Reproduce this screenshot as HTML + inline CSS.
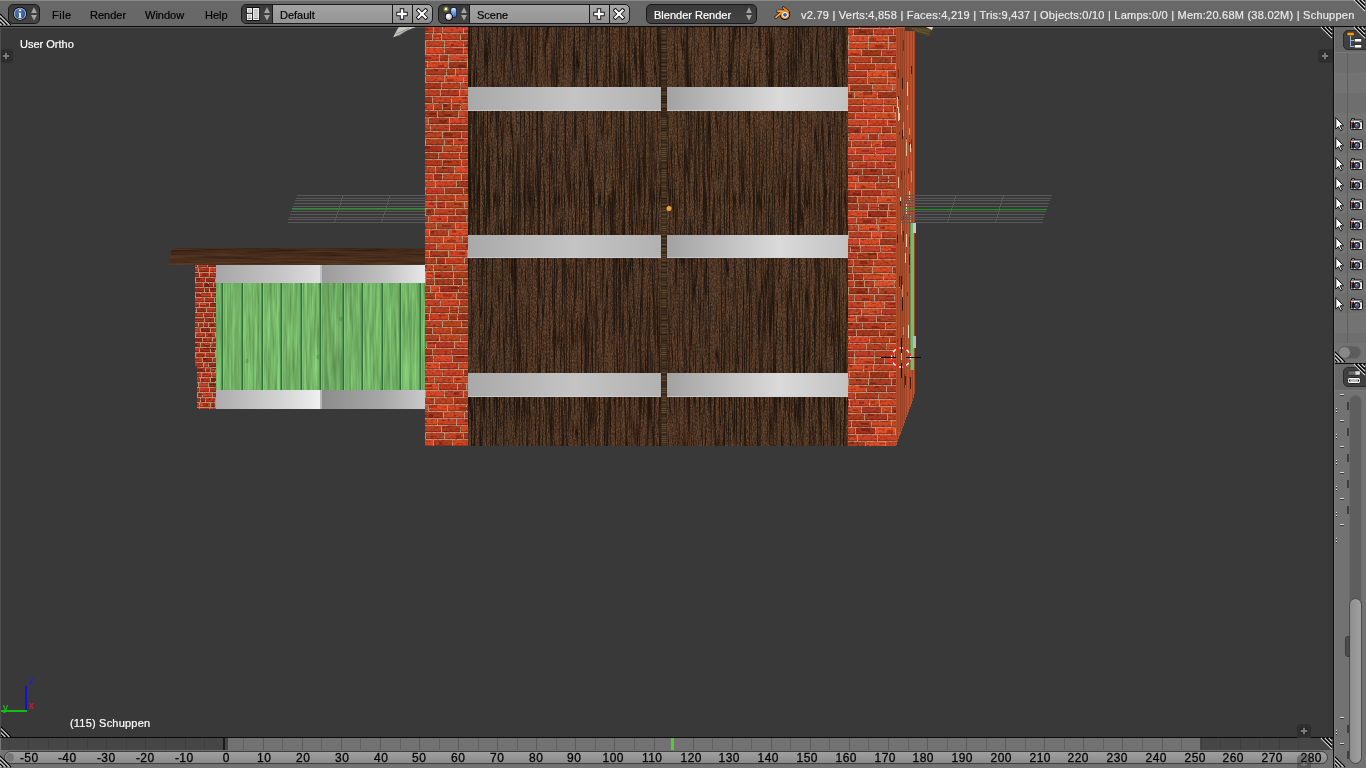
<!DOCTYPE html>
<html><head><meta charset="utf-8">
<style>
*{margin:0;padding:0;box-sizing:border-box}
html,body{width:1366px;height:768px;overflow:hidden;background:#393939;font-family:"Liberation Sans",sans-serif}
.a{position:absolute}
#hdr{left:0;top:0;width:1366px;height:27px;background:#686868;border-bottom:1px solid #0a0a0a}
#vp{left:0;top:27px;width:1333px;height:710px;background:#393939;overflow:hidden}
#vsep{left:1333px;top:27px;width:1px;height:741px;background:#0a0a0a}
#outl{left:1334px;top:27px;width:32px;height:336px;background:#727272}
#psep{left:1334px;top:363px;width:32px;height:1px;background:#0a0a0a}
#props{left:1334px;top:364px;width:32px;height:404px;background:#727272}
#tl{left:0;top:737px;width:1333px;height:31px;background:#727272;border-top:1px solid #0a0a0a}
.dk{background:linear-gradient(#3a3a3a,#444);border:1px solid #191919;border-radius:5px}
.fld{background:linear-gradient(#a3a3a3,#959595);border:1px solid #191919}
.btn{background:linear-gradient(#a8a8a8,#8e8e8e);border:1px solid #191919}
.t{position:absolute;will-change:transform;-webkit-text-stroke:.2px currentColor;white-space:nowrap;font-size:11px;line-height:13px;color:#000}
</style></head><body>
<svg width="0" height="0" style="position:absolute"><defs>
<linearGradient id="mA" x1="0" x2="1"><stop offset="0" stop-color="#a4a4a4"/><stop offset=".7" stop-color="#dcdcdc"/><stop offset="1" stop-color="#b8b8b8"/></linearGradient>
<linearGradient id="mB" x1="0" x2="1"><stop offset="0" stop-color="#a0a0a0"/><stop offset=".5" stop-color="#c8c8c8"/><stop offset="1" stop-color="#a8a8a8"/></linearGradient>
<linearGradient id="sA" x1="0" x2="1"><stop offset="0" stop-color="#a6a6a6"/><stop offset=".6" stop-color="#c4c4c4"/><stop offset="1" stop-color="#dedede"/></linearGradient>
<linearGradient id="sB" x1="0" x2="1"><stop offset="0" stop-color="#9a9a9a"/><stop offset=".6" stop-color="#c0c0c0"/><stop offset="1" stop-color="#e8e8e8"/></linearGradient>
<linearGradient id="sC" x1="0" x2="1"><stop offset="0" stop-color="#acacac"/><stop offset=".7" stop-color="#d8d8d8"/><stop offset="1" stop-color="#f0f0f0"/></linearGradient>
<linearGradient id="sD" x1="0" x2="1"><stop offset="0" stop-color="#8c8c8c"/><stop offset=".6" stop-color="#a8a8a8"/><stop offset="1" stop-color="#cacaca"/></linearGradient>
<linearGradient id="roofg" x1="0" y1="0" x2="0" y2="1"><stop offset="0" stop-color="#3c2616"/><stop offset=".6" stop-color="#4c3020"/><stop offset="1" stop-color="#5a3c28"/></linearGradient>
<linearGradient id="mC" x1="0" x2="1"><stop offset="0" stop-color="#a9a9a9"/><stop offset=".55" stop-color="#c4c4c4"/><stop offset="1" stop-color="#b2b2b2"/></linearGradient>
<linearGradient id="mD" x1="0" x2="1"><stop offset="0" stop-color="#a2a2a2"/><stop offset=".62" stop-color="#dadada"/><stop offset="1" stop-color="#c2c2c2"/></linearGradient>
<filter id="wf" x="0" y="0" width="100%" height="100%" color-interpolation-filters="sRGB">
<feTurbulence type="fractalNoise" baseFrequency="0.8 0.45" numOctaves="3" seed="9" result="n1"/>
<feTurbulence type="fractalNoise" baseFrequency="0.35 0.03" numOctaves="2" seed="4" result="n3"/>
<feComposite in="n1" in2="n3" operator="arithmetic" k1="0" k2="0.8" k3="0.3" k4="-0.05" result="n"/>
<feColorMatrix in="n" type="matrix" values="0.46 0 0 0 0.115  0.33 0 0 0 0.076  0.24 0 0 0 0.05  0 0 0 0 1" result="c"/>
<feTurbulence type="fractalNoise" baseFrequency="0.2 0.005" numOctaves="2" seed="11" result="t"/>
<feColorMatrix in="t" type="matrix" values="0 0 0 0 0.1  0 0 0 0 0.065  0 0 0 0 0.04  1 0 0 0 0" result="t2"/>
<feComponentTransfer in="t2" result="cr"><feFuncA type="table" tableValues="0 0 0 0 0 0 0 0 0 0 0.9 0 0 0 0 0 0 0 0 0 0"/></feComponentTransfer>
<feTurbulence type="fractalNoise" baseFrequency="0.3 0.006" numOctaves="2" seed="21" result="u"/>
<feColorMatrix in="u" type="matrix" values="0 0 0 0 0.12  0 0 0 0 0.08  0 0 0 0 0.05  1 0 0 0 0" result="u2"/>
<feComponentTransfer in="u2" result="cr2"><feFuncA type="table" tableValues="0 0 0 0 0 0 0 0 0 0 0.7 0 0 0 0 0 0 0 0 0 0"/></feComponentTransfer>
<feMerge><feMergeNode in="c"/><feMergeNode in="cr"/><feMergeNode in="cr2"/></feMerge>
</filter>
<filter id="gf" x="0" y="0" width="100%" height="100%" color-interpolation-filters="sRGB">
<feTurbulence type="fractalNoise" baseFrequency="0.4 0.02" numOctaves="3" seed="3" result="n"/>
<feColorMatrix in="n" type="matrix" values="0.7 0 0 0 0.1  1.0 0 0 0 0.18  0.65 0 0 0 0.06  0 0 0 0 1"/>
</filter>
<filter id="bf" x="0" y="0" width="100%" height="100%" color-interpolation-filters="sRGB">
<feTurbulence type="fractalNoise" baseFrequency="0.35 0.5" numOctaves="2" seed="5" result="n"/>
<feColorMatrix in="n" type="matrix" values="0 0 0 0 0.35  0 0 0 0 0.08  0 0 0 0 0.05  -2.5 0 0 0 1.35"/>
</filter>
<filter id="rf" x="0" y="0" width="100%" height="100%" color-interpolation-filters="sRGB">
<feTurbulence type="fractalNoise" baseFrequency="0.02 0.6" numOctaves="3" seed="7" result="n"/>
<feColorMatrix in="n" type="matrix" values="0.5 0 0 0 0.02  0.32 0 0 0 0.01  0.2 0 0 0 0.005  0 0 0 0 1" result="c"/>
<feComposite in="c" in2="SourceAlpha" operator="in"/>
</filter>
</defs></svg>
<div id="hdr" class="a">
<div class="a" style="left:0;top:0;width:1366px;height:1px;background:#8a8a8a"></div>
<!-- info button -->
<div class="a dk" style="left:8px;top:4px;width:32px;height:20px"></div>
<svg class="a" style="left:12px;top:6px" width="16" height="16" viewBox="0 0 16 16"><defs><radialGradient id="ig" cx=".45" cy=".4" r=".6"><stop offset="0" stop-color="#5a88c8"/><stop offset="1" stop-color="#284e8c"/></radialGradient></defs><circle cx="8" cy="7.8" r="7" fill="#0c0e14"/><circle cx="8" cy="7.8" r="6.1" fill="#b4c8e4"/><circle cx="8" cy="7.8" r="5.2" fill="url(#ig)"/><path d="M6.6 6.3H9.3V10.8H10.2V12.2H5.8V10.8H6.7V7.6H5.8V6.3Z" fill="#fff" stroke="#0c1830" stroke-width=".5"/><circle cx="8.1" cy="4.3" r="1.4" fill="#fff" stroke="#0c1830" stroke-width=".4"/></svg>
<svg class="a" style="left:30px;top:7px" width="8" height="14" viewBox="0 0 8 14"><path d="M4 0.2L6.9 6H1.1Z M4 13.6L6.9 8H1.1Z" fill="#a4a4a4"/></svg>
<div class="t" style="left:52px;top:9px;letter-spacing:.5px">File</div>
<div class="t" style="left:90px;top:9px">Render</div>
<div class="t" style="left:145px;top:9px">Window</div>
<div class="t" style="left:205px;top:9px">Help</div>
<!-- layout widget -->
<div class="a dk" style="left:241px;top:4px;width:40px;height:20px"></div>
<div class="a fld" style="left:272px;top:4px;width:121px;height:20px"></div>
<div class="a btn" style="left:392px;top:4px;width:21px;height:20px"></div>
<div class="a btn" style="left:412px;top:4px;width:21px;height:20px;border-radius:0 5px 5px 0"></div>
<svg class="a" style="left:246px;top:7px" width="14" height="14" viewBox="0 0 14 14"><rect x="0" y="0" width="14" height="14" rx="1.2" fill="#0e0e0e"/><rect x=".9" y=".9" width="5.1" height="4.9" rx=".6" fill="#fafafa"/><rect x="1.8" y="1.8" width="3.3" height="3" fill="#c8c8c8"/><rect x=".9" y="6.7" width="5.1" height="6.4" rx=".6" fill="#fafafa"/><rect x="1.8" y="7.5" width="3.3" height="2.6" fill="#c8c8c8"/><rect x="1.6" y="10.8" width="3.7" height=".9" fill="#505050"/><rect x="6.9" y=".9" width="6.2" height="12.2" rx=".6" fill="#fafafa"/><rect x="7.8" y="1.8" width="4.4" height="8.2" fill="#c8c8c8"/><rect x="7.6" y="10.8" width="4.8" height=".9" fill="#505050"/></svg>
<svg class="a" style="left:263px;top:7px" width="8" height="14" viewBox="0 0 8 14"><path d="M4 0.2L6.9 6H1.1Z M4 13.6L6.9 8H1.1Z" fill="#a4a4a4"/></svg>
<div class="t" style="left:280px;top:9px">Default</div>
<svg class="a" style="left:396px;top:8px" width="12" height="12" viewBox="0 0 12 12"><path d="M6 0.3V11.7M0.3 6H11.7" stroke="#151515" stroke-width="4.4"/><path d="M6 1.2V10.8M1.2 6H10.8" stroke="#fff" stroke-width="2.4"/></svg>
<svg class="a" style="left:416px;top:8px" width="12" height="12" viewBox="0 0 12 12"><path d="M1 1L11 11M11 1L1 11" stroke="#151515" stroke-width="4"/><path d="M1.7 1.7L10.3 10.3M10.3 1.7L1.7 10.3" stroke="#fff" stroke-width="2.2"/></svg>
<!-- scene widget -->
<div class="a dk" style="left:438px;top:4px;width:40px;height:20px"></div>
<div class="a fld" style="left:469px;top:4px;width:121px;height:20px"></div>
<div class="a btn" style="left:589px;top:4px;width:21px;height:20px"></div>
<div class="a btn" style="left:609px;top:4px;width:21px;height:20px;border-radius:0 5px 5px 0"></div>
<svg class="a" style="left:442px;top:5px" width="18" height="17" viewBox="0 0 18 17"><defs><linearGradient id="cyl" x1="0" y1="0" x2="0" y2="1"><stop offset="0" stop-color="#fff"/><stop offset=".35" stop-color="#8fb0e8"/><stop offset="1" stop-color="#3f6ec0"/></linearGradient></defs><circle cx="4" cy="4" r="2.6" fill="#9a9a28" opacity=".85"/><circle cx="4" cy="4" r="1.2" fill="#fff"/><rect x="8.2" y="2" width="6.8" height="10.8" rx="2.6" fill="#142a55"/><rect x="9.1" y="2.9" width="5" height="9" rx="2" fill="url(#cyl)"/><circle cx="6.8" cy="11.7" r="3.9" fill="#000"/><circle cx="6.8" cy="11.7" r="3.1" fill="#cfcfcf"/><circle cx="6.1" cy="11" r="1.9" fill="#f4f4f4"/></svg>
<svg class="a" style="left:460px;top:7px" width="8" height="14" viewBox="0 0 8 14"><path d="M4 0.2L6.9 6H1.1Z M4 13.6L6.9 8H1.1Z" fill="#a4a4a4"/></svg>
<div class="t" style="left:477px;top:9px">Scene</div>
<svg class="a" style="left:593px;top:8px" width="12" height="12" viewBox="0 0 12 12"><path d="M6 0.3V11.7M0.3 6H11.7" stroke="#151515" stroke-width="4.4"/><path d="M6 1.2V10.8M1.2 6H10.8" stroke="#fff" stroke-width="2.4"/></svg>
<svg class="a" style="left:613px;top:8px" width="12" height="12" viewBox="0 0 12 12"><path d="M1 1L11 11M11 1L1 11" stroke="#151515" stroke-width="4"/><path d="M1.7 1.7L10.3 10.3M10.3 1.7L1.7 10.3" stroke="#fff" stroke-width="2.2"/></svg>
<!-- render engine -->
<div class="a dk" style="left:646px;top:4px;width:111px;height:20px"></div>
<div class="t" style="left:654px;top:9px;color:#fff">Blender Render</div>
<svg class="a" style="left:745px;top:7px" width="8" height="14" viewBox="0 0 8 14"><path d="M4 0.2L6.9 6H1.1Z M4 13.6L6.9 8H1.1Z" fill="#a4a4a4"/></svg>
<!-- blender logo -->
<svg class="a" style="left:772px;top:5px" width="22" height="17" viewBox="0 0 22 17"><g stroke-linecap="round" fill="none"><path d="M5.9 6.3L12.5 6.3M11.6 3L16 6.6M4 12.3L9.6 7.6" stroke="#1a1008" stroke-width="3.1"/><circle cx="13" cy="9.8" r="5.2" fill="#1a1008"/><path d="M5.9 6.3L12.5 6.3M11.6 3L16 6.6M4 12.3L9.6 7.6" stroke="#f28a1a" stroke-width="1.9"/><circle cx="13" cy="9.8" r="4.3" fill="#f28a1a" stroke="none"/><path d="M6.2 6.1L11 6.1M4.6 11.6L8 8.6" stroke="#ffc890" stroke-width=".8"/></g><circle cx="13" cy="9.8" r="2.9" fill="#fff"/><circle cx="13" cy="9.8" r="1.9" fill="#2a5cb0"/></svg>
<div class="t" style="left:801px;top:9px;color:#ebebeb;letter-spacing:0.24px">v2.79 | Verts:4,858 | Faces:4,219 | Tris:9,437 | Objects:0/10 | Lamps:0/0 | Mem:20.68M (38.02M) | Schuppen</div>
</div>

<div id="vp" class="a"><div class="a" style="left:0;top:-27px;width:1333px;height:768px"><svg class="a" style="left:0;top:0" width="1333" height="768" viewBox="0 0 1333 768" shape-rendering="crispEdges"><rect x="0" y="27" width="1333" height="1" fill="#555555"/><line x1="296.5" y1="195.5" x2="425.0" y2="195.5" stroke="#585858" stroke-width="1"/><line x1="295.6" y1="198.2" x2="425.0" y2="198.2" stroke="#585858" stroke-width="1"/><line x1="294.7" y1="200.9" x2="425.0" y2="200.9" stroke="#585858" stroke-width="1"/><line x1="293.8" y1="203.6" x2="425.0" y2="203.6" stroke="#585858" stroke-width="1"/><line x1="292.9" y1="206.3" x2="425.0" y2="206.3" stroke="#585858" stroke-width="1"/><line x1="292.0" y1="209.0" x2="425.0" y2="209.0" stroke="#585858" stroke-width="1"/><line x1="291.1" y1="211.7" x2="425.0" y2="211.7" stroke="#585858" stroke-width="1"/><line x1="290.2" y1="214.4" x2="425.0" y2="214.4" stroke="#585858" stroke-width="1"/><line x1="289.3" y1="217.1" x2="425.0" y2="217.1" stroke="#585858" stroke-width="1"/><line x1="288.4" y1="219.8" x2="425.0" y2="219.8" stroke="#585858" stroke-width="1"/><line x1="287.5" y1="222.5" x2="425.0" y2="222.5" stroke="#585858" stroke-width="1"/><line x1="343" y1="195.5" x2="334.5" y2="222.5" stroke="#585858" stroke-width="1"/><line x1="390" y1="195.5" x2="381.5" y2="222.5" stroke="#585858" stroke-width="1"/><line x1="292.2" y1="208.5" x2="425.0" y2="208.5" stroke="#1e9a1e" stroke-width="1.6"/><rect x="669" y="446" width="1" height="140" fill="#2a2aa8"/><path d="M172 248H426V265H168Z" fill="url(#roofg)"/><path d="M172 248H426V265H168Z" filter="url(#rf)" opacity=".45"/><rect x="195" y="265" width="21" height="144" fill="#ba9678"/><svg x="195" y="265" width="21" height="144" overflow="hidden"><rect x="-7" y="-2" width="9" height="4" fill="#b53422"/><rect x="-7" y="1" width="9" height="1" fill="#912418"/><rect x="-5" y="-2" width="3" height="2" fill="#8d2418"/><rect x="3" y="-2" width="9" height="4" fill="#bb3b22"/><rect x="3" y="1" width="9" height="1" fill="#952918"/><rect x="4" y="-2" width="7" height="1" fill="#922918"/><rect x="13" y="-2" width="9" height="4" fill="#942d18"/><rect x="13" y="1" width="9" height="1" fill="#771f11"/><rect x="14" y="-2" width="7" height="1" fill="#741f11"/><rect x="-6" y="3" width="9" height="4" fill="#bd3926"/><rect x="-6" y="6" width="9" height="1" fill="#97281b"/><rect x="4" y="3" width="10" height="4" fill="#a7341a"/><rect x="4" y="6" width="10" height="1" fill="#862412"/><rect x="4" y="4" width="5" height="1" fill="#b54121"/><rect x="15" y="3" width="9" height="4" fill="#d53c24"/><rect x="15" y="6" width="9" height="1" fill="#aa2a19"/><rect x="-5" y="8" width="9" height="4" fill="#9b331a"/><rect x="-5" y="11" width="9" height="1" fill="#7c2412"/><rect x="-4" y="8" width="6" height="1" fill="#782412"/><rect x="-5" y="8" width="2" height="1" fill="#a74020"/><rect x="5" y="8" width="9" height="4" fill="#c33f24"/><rect x="5" y="11" width="9" height="1" fill="#9c2c19"/><rect x="7" y="8" width="6" height="3" fill="#982c19"/><rect x="15" y="8" width="9" height="4" fill="#ab3423"/><rect x="15" y="11" width="9" height="1" fill="#892419"/><rect x="1" y="13" width="9" height="4" fill="#a6341e"/><rect x="1" y="16" width="9" height="1" fill="#852415"/><rect x="1" y="13" width="6" height="2" fill="#812415"/><rect x="5" y="14" width="4" height="1" fill="#b34125"/><rect x="11" y="13" width="9" height="4" fill="#94311a"/><rect x="11" y="16" width="9" height="1" fill="#762212"/><rect x="21" y="13" width="9" height="4" fill="#9d3519"/><rect x="21" y="16" width="9" height="1" fill="#7e2512"/><rect x="23" y="13" width="5" height="1" fill="#7b2512"/><rect x="-2" y="18" width="10" height="4" fill="#a3381b"/><rect x="-2" y="21" width="10" height="1" fill="#822712"/><rect x="9" y="18" width="4" height="4" fill="#942b1c"/><rect x="9" y="21" width="4" height="1" fill="#761e13"/><rect x="10" y="19" width="6" height="3" fill="#731e13"/><rect x="14" y="18" width="4" height="4" fill="#a22d1b"/><rect x="14" y="21" width="4" height="1" fill="#821f13"/><rect x="19" y="18" width="4" height="4" fill="#96351e"/><rect x="19" y="21" width="4" height="1" fill="#782515"/><rect x="20" y="19" width="4" height="1" fill="#752515"/><rect x="20" y="19" width="3" height="1" fill="#a24225"/><rect x="0" y="23" width="9" height="4" fill="#9d2f1e"/><rect x="0" y="26" width="9" height="1" fill="#7d2115"/><rect x="10" y="23" width="4" height="4" fill="#91341d"/><rect x="10" y="26" width="4" height="1" fill="#742414"/><rect x="10" y="24" width="2" height="1" fill="#9d4124"/><rect x="15" y="23" width="10" height="4" fill="#a4301e"/><rect x="15" y="26" width="10" height="1" fill="#832115"/><rect x="15" y="23" width="9" height="2" fill="#802115"/><rect x="-9" y="28" width="9" height="4" fill="#d13f28"/><rect x="-9" y="31" width="9" height="1" fill="#a72c1c"/><rect x="1" y="28" width="4" height="4" fill="#bd361f"/><rect x="1" y="31" width="4" height="1" fill="#972616"/><rect x="1" y="29" width="6" height="3" fill="#932616"/><rect x="6" y="28" width="10" height="4" fill="#bf3c23"/><rect x="6" y="31" width="10" height="1" fill="#992a18"/><rect x="17" y="28" width="9" height="4" fill="#ba3723"/><rect x="17" y="31" width="9" height="1" fill="#952719"/><rect x="19" y="29" width="5" height="1" fill="#912719"/><rect x="-1" y="33" width="10" height="4" fill="#bb3e21"/><rect x="-1" y="36" width="10" height="1" fill="#962b17"/><rect x="10" y="33" width="9" height="4" fill="#ab311e"/><rect x="10" y="36" width="9" height="1" fill="#892215"/><rect x="20" y="33" width="9" height="4" fill="#ae341c"/><rect x="20" y="36" width="9" height="1" fill="#8b2414"/><rect x="20" y="33" width="5" height="1" fill="#872414"/><rect x="23" y="34" width="3" height="1" fill="#bb4124"/><rect x="-5" y="38" width="9" height="4" fill="#bc3925"/><rect x="-5" y="41" width="9" height="1" fill="#96281a"/><rect x="5" y="38" width="9" height="4" fill="#c64026"/><rect x="5" y="41" width="9" height="1" fill="#9e2d1a"/><rect x="6" y="39" width="8" height="3" fill="#9a2d1a"/><rect x="6" y="39" width="5" height="1" fill="#d6512f"/><rect x="15" y="38" width="9" height="4" fill="#9a2c18"/><rect x="15" y="41" width="9" height="1" fill="#7b1f11"/><rect x="17" y="38" width="6" height="1" fill="#781f11"/><rect x="-9" y="43" width="10" height="4" fill="#cd4122"/><rect x="-9" y="46" width="10" height="1" fill="#a42d17"/><rect x="-8" y="43" width="9" height="2" fill="#9f2d17"/><rect x="2" y="43" width="9" height="4" fill="#9d301f"/><rect x="2" y="46" width="9" height="1" fill="#7d2215"/><rect x="12" y="43" width="9" height="4" fill="#b13b1c"/><rect x="12" y="46" width="9" height="1" fill="#8d2914"/><rect x="-1" y="48" width="9" height="4" fill="#b23d1f"/><rect x="-1" y="51" width="9" height="1" fill="#8f2a16"/><rect x="9" y="48" width="9" height="4" fill="#b33422"/><rect x="9" y="51" width="9" height="1" fill="#8f2418"/><rect x="19" y="48" width="10" height="4" fill="#993019"/><rect x="19" y="51" width="10" height="1" fill="#7a2111"/><rect x="21" y="49" width="8" height="1" fill="#772111"/><rect x="0" y="53" width="9" height="4" fill="#b13b20"/><rect x="0" y="56" width="9" height="1" fill="#8d2916"/><rect x="0" y="54" width="9" height="1" fill="#8a2916"/><rect x="2" y="55" width="3" height="1" fill="#bf4928"/><rect x="10" y="53" width="9" height="4" fill="#9e341f"/><rect x="10" y="56" width="9" height="1" fill="#7e2416"/><rect x="20" y="53" width="9" height="4" fill="#bb3d21"/><rect x="20" y="56" width="9" height="1" fill="#962b17"/><rect x="-7" y="58" width="10" height="4" fill="#9f371b"/><rect x="-7" y="61" width="10" height="1" fill="#7f2613"/><rect x="4" y="58" width="4" height="4" fill="#a6381d"/><rect x="4" y="61" width="4" height="1" fill="#842714"/><rect x="4" y="60" width="2" height="1" fill="#b34725"/><rect x="9" y="58" width="4" height="4" fill="#ad3123"/><rect x="9" y="61" width="4" height="1" fill="#8a2218"/><rect x="14" y="58" width="9" height="4" fill="#b63321"/><rect x="14" y="61" width="9" height="1" fill="#912417"/><rect x="15" y="59" width="4" height="2" fill="#8d2417"/><rect x="-4" y="63" width="9" height="4" fill="#d24625"/><rect x="-4" y="66" width="9" height="1" fill="#a8311a"/><rect x="-3" y="63" width="5" height="1" fill="#a4311a"/><rect x="6" y="63" width="9" height="4" fill="#93291a"/><rect x="6" y="66" width="9" height="1" fill="#751d12"/><rect x="9" y="63" width="5" height="1" fill="#9e3420"/><rect x="16" y="63" width="10" height="4" fill="#bd3c23"/><rect x="16" y="66" width="10" height="1" fill="#972a19"/><rect x="1" y="68" width="9" height="4" fill="#c03d22"/><rect x="1" y="71" width="9" height="1" fill="#9a2a18"/><rect x="11" y="68" width="9" height="4" fill="#ba3a24"/><rect x="11" y="71" width="9" height="1" fill="#952919"/><rect x="13" y="69" width="4" height="2" fill="#912919"/><rect x="21" y="68" width="9" height="4" fill="#a8381a"/><rect x="21" y="71" width="9" height="1" fill="#862712"/><rect x="23" y="68" width="5" height="2" fill="#832712"/><rect x="24" y="70" width="3" height="1" fill="#b64621"/><rect x="-2" y="73" width="9" height="4" fill="#bf3623"/><rect x="-2" y="76" width="9" height="1" fill="#992618"/><rect x="-1" y="73" width="8" height="3" fill="#952618"/><rect x="8" y="73" width="9" height="4" fill="#b6351d"/><rect x="8" y="76" width="9" height="1" fill="#922514"/><rect x="8" y="74" width="4" height="1" fill="#8e2514"/><rect x="9" y="73" width="3" height="1" fill="#c54225"/><rect x="18" y="73" width="9" height="4" fill="#ca3c29"/><rect x="18" y="76" width="9" height="1" fill="#a12a1d"/><rect x="18" y="74" width="6" height="2" fill="#9d2a1d"/><rect x="-4" y="78" width="9" height="4" fill="#a0341a"/><rect x="-4" y="81" width="9" height="1" fill="#802512"/><rect x="-3" y="79" width="5" height="3" fill="#7d2512"/><rect x="6" y="78" width="9" height="4" fill="#b63e20"/><rect x="6" y="81" width="9" height="1" fill="#912b17"/><rect x="8" y="79" width="7" height="3" fill="#8d2b17"/><rect x="10" y="79" width="4" height="1" fill="#c44e29"/><rect x="16" y="78" width="9" height="4" fill="#d14428"/><rect x="16" y="81" width="9" height="1" fill="#a72f1c"/><rect x="17" y="79" width="9" height="2" fill="#a32f1c"/><rect x="-5" y="83" width="9" height="4" fill="#bd3b23"/><rect x="-5" y="86" width="9" height="1" fill="#972918"/><rect x="-4" y="83" width="4" height="2" fill="#932918"/><rect x="5" y="83" width="10" height="4" fill="#a4331c"/><rect x="5" y="86" width="10" height="1" fill="#832413"/><rect x="8" y="83" width="8" height="1" fill="#802413"/><rect x="16" y="83" width="4" height="4" fill="#973219"/><rect x="16" y="86" width="4" height="1" fill="#792311"/><rect x="16" y="83" width="8" height="2" fill="#762311"/><rect x="17" y="84" width="4" height="1" fill="#a33f20"/><rect x="21" y="83" width="9" height="4" fill="#b73f22"/><rect x="21" y="86" width="9" height="1" fill="#922c17"/><rect x="-9" y="88" width="9" height="4" fill="#b93f20"/><rect x="-9" y="91" width="9" height="1" fill="#942c16"/><rect x="1" y="88" width="9" height="4" fill="#cb4124"/><rect x="1" y="91" width="9" height="1" fill="#a22d19"/><rect x="2" y="89" width="7" height="2" fill="#9e2d19"/><rect x="11" y="88" width="9" height="4" fill="#b03d22"/><rect x="11" y="91" width="9" height="1" fill="#8d2b17"/><rect x="12" y="90" width="2" height="1" fill="#be4d2a"/><rect x="21" y="88" width="10" height="4" fill="#a13020"/><rect x="21" y="91" width="10" height="1" fill="#812216"/><rect x="26" y="89" width="2" height="1" fill="#ae3d28"/><rect x="-2" y="93" width="9" height="4" fill="#bf4020"/><rect x="-2" y="96" width="9" height="1" fill="#982d16"/><rect x="0" y="94" width="4" height="1" fill="#952d16"/><rect x="8" y="93" width="9" height="4" fill="#972b1e"/><rect x="8" y="96" width="9" height="1" fill="#781e15"/><rect x="8" y="93" width="5" height="2" fill="#751e15"/><rect x="11" y="94" width="4" height="1" fill="#a33626"/><rect x="18" y="93" width="10" height="4" fill="#b83e22"/><rect x="18" y="96" width="10" height="1" fill="#932b18"/><rect x="-1" y="98" width="9" height="4" fill="#b33620"/><rect x="-1" y="101" width="9" height="1" fill="#8f2617"/><rect x="9" y="98" width="4" height="4" fill="#c03d24"/><rect x="9" y="101" width="4" height="1" fill="#9a2b19"/><rect x="9" y="100" width="3" height="1" fill="#d04d2d"/><rect x="14" y="98" width="10" height="4" fill="#922d1b"/><rect x="14" y="101" width="10" height="1" fill="#741f13"/><rect x="18" y="99" width="2" height="1" fill="#9d3822"/><rect x="0" y="103" width="10" height="4" fill="#9b381d"/><rect x="0" y="106" width="10" height="1" fill="#7c2714"/><rect x="2" y="104" width="6" height="3" fill="#792714"/><rect x="0" y="103" width="5" height="1" fill="#a84624"/><rect x="11" y="103" width="4" height="4" fill="#cc3f26"/><rect x="11" y="106" width="4" height="1" fill="#a32c1b"/><rect x="11" y="104" width="4" height="3" fill="#9f2c1b"/><rect x="16" y="103" width="4" height="4" fill="#a93822"/><rect x="16" y="106" width="4" height="1" fill="#872718"/><rect x="17" y="103" width="6" height="2" fill="#842718"/><rect x="16" y="104" width="5" height="1" fill="#b7462b"/><rect x="21" y="103" width="10" height="4" fill="#b5321f"/><rect x="21" y="106" width="10" height="1" fill="#912315"/><rect x="-3" y="108" width="9" height="4" fill="#c43a20"/><rect x="-3" y="111" width="9" height="1" fill="#9d2916"/><rect x="-1" y="109" width="5" height="1" fill="#992916"/><rect x="7" y="108" width="9" height="4" fill="#bd3f25"/><rect x="7" y="111" width="9" height="1" fill="#972c1a"/><rect x="8" y="109" width="5" height="1" fill="#932c1a"/><rect x="17" y="108" width="10" height="4" fill="#ca3f24"/><rect x="17" y="111" width="10" height="1" fill="#a12c19"/><rect x="20" y="109" width="9" height="1" fill="#9d2c19"/><rect x="-4" y="113" width="9" height="4" fill="#ba3a1f"/><rect x="-4" y="116" width="9" height="1" fill="#952915"/><rect x="6" y="113" width="9" height="4" fill="#c43921"/><rect x="6" y="116" width="9" height="1" fill="#9d2817"/><rect x="6" y="114" width="3" height="3" fill="#992817"/><rect x="16" y="113" width="4" height="4" fill="#95331f"/><rect x="16" y="116" width="4" height="1" fill="#772416"/><rect x="16" y="113" width="8" height="3" fill="#742416"/><rect x="21" y="113" width="10" height="4" fill="#a53320"/><rect x="21" y="116" width="10" height="1" fill="#842416"/><rect x="23" y="114" width="8" height="1" fill="#812416"/><rect x="-7" y="118" width="10" height="4" fill="#9a2b1e"/><rect x="-7" y="121" width="10" height="1" fill="#7b1e15"/><rect x="4" y="118" width="9" height="4" fill="#cb4328"/><rect x="4" y="121" width="9" height="1" fill="#a22f1c"/><rect x="14" y="118" width="10" height="4" fill="#90341e"/><rect x="14" y="121" width="10" height="1" fill="#732415"/><rect x="15" y="119" width="8" height="1" fill="#712415"/><rect x="-5" y="123" width="9" height="4" fill="#b33e21"/><rect x="-5" y="126" width="9" height="1" fill="#8f2b17"/><rect x="5" y="123" width="9" height="4" fill="#c13923"/><rect x="5" y="126" width="9" height="1" fill="#9b2819"/><rect x="15" y="123" width="9" height="4" fill="#a4331f"/><rect x="15" y="126" width="9" height="1" fill="#832416"/><rect x="-7" y="128" width="9" height="4" fill="#b53623"/><rect x="-7" y="131" width="9" height="1" fill="#912619"/><rect x="3" y="128" width="4" height="4" fill="#b03d24"/><rect x="3" y="131" width="4" height="1" fill="#8c2a19"/><rect x="3" y="129" width="9" height="1" fill="#892a19"/><rect x="8" y="128" width="9" height="4" fill="#d44026"/><rect x="8" y="131" width="9" height="1" fill="#a92d1a"/><rect x="18" y="128" width="9" height="4" fill="#bb3622"/><rect x="18" y="131" width="9" height="1" fill="#952618"/><rect x="18" y="129" width="7" height="1" fill="#912618"/><rect x="-4" y="133" width="9" height="4" fill="#a9341f"/><rect x="-4" y="136" width="9" height="1" fill="#872416"/><rect x="6" y="133" width="4" height="4" fill="#992c19"/><rect x="6" y="136" width="4" height="1" fill="#7a1f11"/><rect x="6" y="133" width="4" height="1" fill="#a53720"/><rect x="11" y="133" width="9" height="4" fill="#bb3f23"/><rect x="11" y="136" width="9" height="1" fill="#962c19"/><rect x="13" y="134" width="3" height="1" fill="#922c19"/><rect x="21" y="133" width="10" height="4" fill="#9e2d1c"/><rect x="21" y="136" width="10" height="1" fill="#7e1f14"/><rect x="23" y="134" width="4" height="1" fill="#ab3823"/><rect x="-5" y="138" width="9" height="4" fill="#bd3c1e"/><rect x="-5" y="141" width="9" height="1" fill="#972a15"/><rect x="-5" y="138" width="8" height="2" fill="#942a15"/><rect x="5" y="138" width="10" height="4" fill="#d54422"/><rect x="5" y="141" width="10" height="1" fill="#aa2f18"/><rect x="8" y="138" width="5" height="3" fill="#a62f18"/><rect x="5" y="140" width="3" height="1" fill="#e6552b"/><rect x="16" y="138" width="4" height="4" fill="#a0371f"/><rect x="16" y="141" width="4" height="1" fill="#802615"/><rect x="21" y="138" width="4" height="4" fill="#bb3824"/><rect x="21" y="141" width="4" height="1" fill="#962719"/><rect x="22" y="139" width="8" height="3" fill="#922719"/><rect x="-5" y="143" width="9" height="4" fill="#9c2c1d"/><rect x="-5" y="146" width="9" height="1" fill="#7d1f14"/><rect x="-5" y="144" width="3" height="2" fill="#7a1f14"/><rect x="5" y="143" width="9" height="4" fill="#95361b"/><rect x="5" y="146" width="9" height="1" fill="#772613"/><rect x="15" y="143" width="9" height="4" fill="#ca3d23"/><rect x="15" y="146" width="9" height="1" fill="#a22b18"/><rect x="0" y="0" width="21" height="144" filter="url(#bf)" opacity=".5"/></svg><rect x="194" y="265" width="1" height="102" fill="#393939"/><rect x="194" y="367" width="3" height="42" fill="#393939"/><rect x="216" y="283" width="209" height="107" fill="#70b870"/><rect x="216" y="283" width="6" height="107" fill="#73b369"/><rect x="222" y="283" width="20" height="107" fill="#75b66a"/><rect x="242" y="283" width="20" height="107" fill="#75b76b"/><rect x="262" y="283" width="19" height="107" fill="#77bb6d"/><rect x="281" y="283" width="20" height="107" fill="#74b66a"/><rect x="301" y="283" width="19" height="107" fill="#77ba6d"/><rect x="320" y="283" width="23" height="107" fill="#6aa661"/><rect x="343" y="283" width="19" height="107" fill="#70b067"/><rect x="362" y="283" width="20" height="107" fill="#78bb6d"/><rect x="382" y="283" width="18" height="107" fill="#73b469"/><rect x="400" y="283" width="20" height="107" fill="#77ba6c"/><rect x="420" y="283" width="5" height="107" fill="#6ba862"/><rect x="216" y="283" width="209" height="107" filter="url(#gf)" opacity=".35"/><rect x="222" y="283" width="1" height="107" fill="#2f6f36"/><rect x="221" y="283" width="1" height="107" fill="#4a8a4e" opacity=".8"/><rect x="223" y="283" width="1" height="107" fill="#90d08c" opacity=".5"/><rect x="242" y="283" width="1" height="107" fill="#2f6f36"/><rect x="241" y="283" width="1" height="107" fill="#4a8a4e" opacity=".8"/><rect x="243" y="283" width="1" height="107" fill="#90d08c" opacity=".5"/><rect x="262" y="283" width="1" height="107" fill="#2f6f36"/><rect x="261" y="283" width="1" height="107" fill="#4a8a4e" opacity=".8"/><rect x="263" y="283" width="1" height="107" fill="#90d08c" opacity=".5"/><rect x="281" y="283" width="1" height="107" fill="#2f6f36"/><rect x="280" y="283" width="1" height="107" fill="#4a8a4e" opacity=".8"/><rect x="282" y="283" width="1" height="107" fill="#90d08c" opacity=".5"/><rect x="301" y="283" width="1" height="107" fill="#2f6f36"/><rect x="300" y="283" width="1" height="107" fill="#4a8a4e" opacity=".8"/><rect x="302" y="283" width="1" height="107" fill="#90d08c" opacity=".5"/><rect x="320" y="283" width="1" height="107" fill="#2f6f36"/><rect x="319" y="283" width="1" height="107" fill="#4a8a4e" opacity=".8"/><rect x="321" y="283" width="1" height="107" fill="#90d08c" opacity=".5"/><rect x="343" y="283" width="1" height="107" fill="#2f6f36"/><rect x="342" y="283" width="1" height="107" fill="#4a8a4e" opacity=".8"/><rect x="344" y="283" width="1" height="107" fill="#90d08c" opacity=".5"/><rect x="362" y="283" width="1" height="107" fill="#2f6f36"/><rect x="361" y="283" width="1" height="107" fill="#4a8a4e" opacity=".8"/><rect x="363" y="283" width="1" height="107" fill="#90d08c" opacity=".5"/><rect x="382" y="283" width="1" height="107" fill="#2f6f36"/><rect x="381" y="283" width="1" height="107" fill="#4a8a4e" opacity=".8"/><rect x="383" y="283" width="1" height="107" fill="#90d08c" opacity=".5"/><rect x="400" y="283" width="1" height="107" fill="#2f6f36"/><rect x="399" y="283" width="1" height="107" fill="#4a8a4e" opacity=".8"/><rect x="401" y="283" width="1" height="107" fill="#90d08c" opacity=".5"/><rect x="420" y="283" width="1" height="107" fill="#2f6f36"/><rect x="419" y="283" width="1" height="107" fill="#4a8a4e" opacity=".8"/><rect x="421" y="283" width="1" height="107" fill="#90d08c" opacity=".5"/><ellipse cx="341" cy="319" rx="1.5" ry="2.5" fill="#4a8a4c" opacity=".5" shape-rendering="auto"/><ellipse cx="318" cy="357" rx="1.5" ry="2.5" fill="#4a8a4c" opacity=".5" shape-rendering="auto"/><ellipse cx="247" cy="361" rx="1.5" ry="2.5" fill="#4a8a4c" opacity=".5" shape-rendering="auto"/><rect x="216" y="265" width="104" height="18" fill="url(#sA)"/><rect x="322" y="265" width="103" height="18" fill="url(#sB)"/><rect x="320" y="265" width="2" height="18" fill="#c0c0c0"/><rect x="216" y="390" width="104" height="19" fill="url(#sC)"/><rect x="322" y="390" width="103" height="19" fill="url(#sD)"/><rect x="320" y="390" width="2" height="19" fill="#b8b8b8"/><rect x="468" y="27" width="380" height="419" filter="url(#wf)"/><rect x="468" y="27" width="55" height="76" fill="#000" opacity="0.07"/><rect x="523" y="27" width="85" height="76" fill="#000" opacity="0.05"/><rect x="608" y="27" width="85" height="76" fill="#3a1a08" opacity="0.06"/><rect x="693" y="27" width="85" height="76" fill="#3a1a08" opacity="0.03"/><rect x="778" y="27" width="70" height="76" fill="#000" opacity="0.08"/><rect x="468" y="103" width="55" height="116" fill="#1a0a04" opacity="0.05"/><rect x="523" y="103" width="85" height="116" fill="#000" opacity="0.04"/><rect x="608" y="103" width="85" height="116" fill="#3a1a08" opacity="0.06"/><rect x="693" y="103" width="85" height="116" fill="#3a1a08" opacity="0.06"/><rect x="778" y="103" width="70" height="116" fill="#3a1a08" opacity="0.08"/><rect x="468" y="219" width="55" height="116" fill="#000" opacity="0.07"/><rect x="523" y="219" width="85" height="116" fill="#3a1a08" opacity="0.05"/><rect x="608" y="219" width="85" height="116" fill="#000" opacity="0.07"/><rect x="693" y="219" width="85" height="116" fill="#000" opacity="0.04"/><rect x="778" y="219" width="70" height="116" fill="#3a1a08" opacity="0.03"/><rect x="468" y="335" width="55" height="111" fill="#000" opacity="0.08"/><rect x="523" y="335" width="85" height="111" fill="#1a0a04" opacity="0.06"/><rect x="608" y="335" width="85" height="111" fill="#3a1a08" opacity="0.09"/><rect x="693" y="335" width="85" height="111" fill="#1a0a04" opacity="0.07"/><rect x="778" y="335" width="70" height="111" fill="#1a0a04" opacity="0.05"/><rect x="661" y="27" width="6" height="419" fill="#42301f"/><rect x="661" y="28" width="6" height="1" fill="#3a2a1c"/><rect x="661" y="30" width="6" height="1" fill="#5e4834"/><rect x="661" y="32" width="6" height="1" fill="#5e4834"/><rect x="661" y="34" width="6" height="1" fill="#3a2a1c"/><rect x="661" y="36" width="6" height="1" fill="#5a4230"/><rect x="661" y="38" width="6" height="1" fill="#4a3626"/><rect x="661" y="40" width="6" height="1" fill="#2e2016"/><rect x="661" y="42" width="6" height="1" fill="#5a4230"/><rect x="661" y="44" width="6" height="1" fill="#2e2016"/><rect x="661" y="46" width="6" height="1" fill="#5a4230"/><rect x="661" y="48" width="6" height="1" fill="#5e4834"/><rect x="661" y="50" width="6" height="1" fill="#4a3626"/><rect x="661" y="52" width="6" height="1" fill="#2e2016"/><rect x="661" y="54" width="6" height="1" fill="#4a3626"/><rect x="661" y="56" width="6" height="1" fill="#3a2a1c"/><rect x="661" y="58" width="6" height="1" fill="#5a4230"/><rect x="661" y="60" width="6" height="1" fill="#3a2a1c"/><rect x="661" y="62" width="6" height="1" fill="#2e2016"/><rect x="661" y="64" width="6" height="1" fill="#5a4230"/><rect x="661" y="66" width="6" height="1" fill="#2e2016"/><rect x="661" y="68" width="6" height="1" fill="#4a3626"/><rect x="661" y="70" width="6" height="1" fill="#5e4834"/><rect x="661" y="72" width="6" height="1" fill="#2e2016"/><rect x="661" y="74" width="6" height="1" fill="#4a3626"/><rect x="661" y="76" width="6" height="1" fill="#2e2016"/><rect x="661" y="78" width="6" height="1" fill="#5a4230"/><rect x="661" y="80" width="6" height="1" fill="#2e2016"/><rect x="661" y="82" width="6" height="1" fill="#3a2a1c"/><rect x="661" y="84" width="6" height="1" fill="#3a2a1c"/><rect x="661" y="86" width="6" height="1" fill="#4a3626"/><rect x="661" y="88" width="6" height="1" fill="#2e2016"/><rect x="661" y="90" width="6" height="1" fill="#2e2016"/><rect x="661" y="92" width="6" height="1" fill="#5a4230"/><rect x="661" y="94" width="6" height="1" fill="#5a4230"/><rect x="661" y="96" width="6" height="1" fill="#2e2016"/><rect x="661" y="98" width="6" height="1" fill="#2e2016"/><rect x="661" y="100" width="6" height="1" fill="#2e2016"/><rect x="661" y="102" width="6" height="1" fill="#2e2016"/><rect x="661" y="104" width="6" height="1" fill="#5e4834"/><rect x="661" y="106" width="6" height="1" fill="#5e4834"/><rect x="661" y="108" width="6" height="1" fill="#2e2016"/><rect x="661" y="110" width="6" height="1" fill="#3a2a1c"/><rect x="661" y="112" width="6" height="1" fill="#2e2016"/><rect x="661" y="114" width="6" height="1" fill="#2e2016"/><rect x="661" y="116" width="6" height="1" fill="#2e2016"/><rect x="661" y="118" width="6" height="1" fill="#4a3626"/><rect x="661" y="120" width="6" height="1" fill="#5e4834"/><rect x="661" y="122" width="6" height="1" fill="#5a4230"/><rect x="661" y="124" width="6" height="1" fill="#5e4834"/><rect x="661" y="126" width="6" height="1" fill="#4a3626"/><rect x="661" y="128" width="6" height="1" fill="#2e2016"/><rect x="661" y="130" width="6" height="1" fill="#2e2016"/><rect x="661" y="132" width="6" height="1" fill="#5e4834"/><rect x="661" y="134" width="6" height="1" fill="#5a4230"/><rect x="661" y="136" width="6" height="1" fill="#5e4834"/><rect x="661" y="138" width="6" height="1" fill="#5e4834"/><rect x="661" y="140" width="6" height="1" fill="#3a2a1c"/><rect x="661" y="142" width="6" height="1" fill="#3a2a1c"/><rect x="661" y="144" width="6" height="1" fill="#5a4230"/><rect x="661" y="146" width="6" height="1" fill="#3a2a1c"/><rect x="661" y="148" width="6" height="1" fill="#5e4834"/><rect x="661" y="150" width="6" height="1" fill="#5a4230"/><rect x="661" y="152" width="6" height="1" fill="#5e4834"/><rect x="661" y="154" width="6" height="1" fill="#5e4834"/><rect x="661" y="156" width="6" height="1" fill="#5e4834"/><rect x="661" y="158" width="6" height="1" fill="#4a3626"/><rect x="661" y="160" width="6" height="1" fill="#5e4834"/><rect x="661" y="162" width="6" height="1" fill="#2e2016"/><rect x="661" y="164" width="6" height="1" fill="#4a3626"/><rect x="661" y="166" width="6" height="1" fill="#4a3626"/><rect x="661" y="168" width="6" height="1" fill="#2e2016"/><rect x="661" y="170" width="6" height="1" fill="#5a4230"/><rect x="661" y="172" width="6" height="1" fill="#5e4834"/><rect x="661" y="174" width="6" height="1" fill="#5a4230"/><rect x="661" y="176" width="6" height="1" fill="#5e4834"/><rect x="661" y="178" width="6" height="1" fill="#4a3626"/><rect x="661" y="180" width="6" height="1" fill="#5a4230"/><rect x="661" y="182" width="6" height="1" fill="#3a2a1c"/><rect x="661" y="184" width="6" height="1" fill="#4a3626"/><rect x="661" y="186" width="6" height="1" fill="#5e4834"/><rect x="661" y="188" width="6" height="1" fill="#4a3626"/><rect x="661" y="190" width="6" height="1" fill="#3a2a1c"/><rect x="661" y="192" width="6" height="1" fill="#5a4230"/><rect x="661" y="194" width="6" height="1" fill="#4a3626"/><rect x="661" y="196" width="6" height="1" fill="#5a4230"/><rect x="661" y="198" width="6" height="1" fill="#2e2016"/><rect x="661" y="200" width="6" height="1" fill="#3a2a1c"/><rect x="661" y="202" width="6" height="1" fill="#2e2016"/><rect x="661" y="204" width="6" height="1" fill="#5a4230"/><rect x="661" y="206" width="6" height="1" fill="#2e2016"/><rect x="661" y="208" width="6" height="1" fill="#4a3626"/><rect x="661" y="210" width="6" height="1" fill="#5e4834"/><rect x="661" y="212" width="6" height="1" fill="#3a2a1c"/><rect x="661" y="214" width="6" height="1" fill="#5e4834"/><rect x="661" y="216" width="6" height="1" fill="#3a2a1c"/><rect x="661" y="218" width="6" height="1" fill="#5e4834"/><rect x="661" y="220" width="6" height="1" fill="#4a3626"/><rect x="661" y="222" width="6" height="1" fill="#5a4230"/><rect x="661" y="224" width="6" height="1" fill="#3a2a1c"/><rect x="661" y="226" width="6" height="1" fill="#5e4834"/><rect x="661" y="228" width="6" height="1" fill="#5e4834"/><rect x="661" y="230" width="6" height="1" fill="#5a4230"/><rect x="661" y="232" width="6" height="1" fill="#4a3626"/><rect x="661" y="234" width="6" height="1" fill="#5a4230"/><rect x="661" y="236" width="6" height="1" fill="#2e2016"/><rect x="661" y="238" width="6" height="1" fill="#5e4834"/><rect x="661" y="240" width="6" height="1" fill="#3a2a1c"/><rect x="661" y="242" width="6" height="1" fill="#3a2a1c"/><rect x="661" y="244" width="6" height="1" fill="#5e4834"/><rect x="661" y="246" width="6" height="1" fill="#2e2016"/><rect x="661" y="248" width="6" height="1" fill="#5e4834"/><rect x="661" y="250" width="6" height="1" fill="#5e4834"/><rect x="661" y="252" width="6" height="1" fill="#3a2a1c"/><rect x="661" y="254" width="6" height="1" fill="#5a4230"/><rect x="661" y="256" width="6" height="1" fill="#5e4834"/><rect x="661" y="258" width="6" height="1" fill="#5e4834"/><rect x="661" y="260" width="6" height="1" fill="#5e4834"/><rect x="661" y="262" width="6" height="1" fill="#2e2016"/><rect x="661" y="264" width="6" height="1" fill="#5a4230"/><rect x="661" y="266" width="6" height="1" fill="#2e2016"/><rect x="661" y="268" width="6" height="1" fill="#5e4834"/><rect x="661" y="270" width="6" height="1" fill="#4a3626"/><rect x="661" y="272" width="6" height="1" fill="#2e2016"/><rect x="661" y="274" width="6" height="1" fill="#5a4230"/><rect x="661" y="276" width="6" height="1" fill="#5a4230"/><rect x="661" y="278" width="6" height="1" fill="#3a2a1c"/><rect x="661" y="280" width="6" height="1" fill="#3a2a1c"/><rect x="661" y="282" width="6" height="1" fill="#4a3626"/><rect x="661" y="284" width="6" height="1" fill="#5a4230"/><rect x="661" y="286" width="6" height="1" fill="#2e2016"/><rect x="661" y="288" width="6" height="1" fill="#3a2a1c"/><rect x="661" y="290" width="6" height="1" fill="#5e4834"/><rect x="661" y="292" width="6" height="1" fill="#5e4834"/><rect x="661" y="294" width="6" height="1" fill="#4a3626"/><rect x="661" y="296" width="6" height="1" fill="#4a3626"/><rect x="661" y="298" width="6" height="1" fill="#2e2016"/><rect x="661" y="300" width="6" height="1" fill="#5a4230"/><rect x="661" y="302" width="6" height="1" fill="#5a4230"/><rect x="661" y="304" width="6" height="1" fill="#4a3626"/><rect x="661" y="306" width="6" height="1" fill="#5e4834"/><rect x="661" y="308" width="6" height="1" fill="#2e2016"/><rect x="661" y="310" width="6" height="1" fill="#2e2016"/><rect x="661" y="312" width="6" height="1" fill="#3a2a1c"/><rect x="661" y="314" width="6" height="1" fill="#2e2016"/><rect x="661" y="316" width="6" height="1" fill="#4a3626"/><rect x="661" y="318" width="6" height="1" fill="#5a4230"/><rect x="661" y="320" width="6" height="1" fill="#2e2016"/><rect x="661" y="322" width="6" height="1" fill="#4a3626"/><rect x="661" y="324" width="6" height="1" fill="#5e4834"/><rect x="661" y="326" width="6" height="1" fill="#2e2016"/><rect x="661" y="328" width="6" height="1" fill="#5a4230"/><rect x="661" y="330" width="6" height="1" fill="#4a3626"/><rect x="661" y="332" width="6" height="1" fill="#5e4834"/><rect x="661" y="334" width="6" height="1" fill="#2e2016"/><rect x="661" y="336" width="6" height="1" fill="#4a3626"/><rect x="661" y="338" width="6" height="1" fill="#3a2a1c"/><rect x="661" y="340" width="6" height="1" fill="#2e2016"/><rect x="661" y="342" width="6" height="1" fill="#3a2a1c"/><rect x="661" y="344" width="6" height="1" fill="#4a3626"/><rect x="661" y="346" width="6" height="1" fill="#4a3626"/><rect x="661" y="348" width="6" height="1" fill="#5e4834"/><rect x="661" y="350" width="6" height="1" fill="#4a3626"/><rect x="661" y="352" width="6" height="1" fill="#5e4834"/><rect x="661" y="354" width="6" height="1" fill="#5e4834"/><rect x="661" y="356" width="6" height="1" fill="#4a3626"/><rect x="661" y="358" width="6" height="1" fill="#4a3626"/><rect x="661" y="360" width="6" height="1" fill="#2e2016"/><rect x="661" y="362" width="6" height="1" fill="#5a4230"/><rect x="661" y="364" width="6" height="1" fill="#4a3626"/><rect x="661" y="366" width="6" height="1" fill="#3a2a1c"/><rect x="661" y="368" width="6" height="1" fill="#2e2016"/><rect x="661" y="370" width="6" height="1" fill="#4a3626"/><rect x="661" y="372" width="6" height="1" fill="#5e4834"/><rect x="661" y="374" width="6" height="1" fill="#2e2016"/><rect x="661" y="376" width="6" height="1" fill="#5a4230"/><rect x="661" y="378" width="6" height="1" fill="#4a3626"/><rect x="661" y="380" width="6" height="1" fill="#5e4834"/><rect x="661" y="382" width="6" height="1" fill="#3a2a1c"/><rect x="661" y="384" width="6" height="1" fill="#3a2a1c"/><rect x="661" y="386" width="6" height="1" fill="#3a2a1c"/><rect x="661" y="388" width="6" height="1" fill="#5e4834"/><rect x="661" y="390" width="6" height="1" fill="#5a4230"/><rect x="661" y="392" width="6" height="1" fill="#5e4834"/><rect x="661" y="394" width="6" height="1" fill="#3a2a1c"/><rect x="661" y="396" width="6" height="1" fill="#5a4230"/><rect x="661" y="398" width="6" height="1" fill="#5e4834"/><rect x="661" y="400" width="6" height="1" fill="#5e4834"/><rect x="661" y="402" width="6" height="1" fill="#3a2a1c"/><rect x="661" y="404" width="6" height="1" fill="#5e4834"/><rect x="661" y="406" width="6" height="1" fill="#4a3626"/><rect x="661" y="408" width="6" height="1" fill="#5e4834"/><rect x="661" y="410" width="6" height="1" fill="#5e4834"/><rect x="661" y="412" width="6" height="1" fill="#5e4834"/><rect x="661" y="414" width="6" height="1" fill="#2e2016"/><rect x="661" y="416" width="6" height="1" fill="#3a2a1c"/><rect x="661" y="418" width="6" height="1" fill="#5a4230"/><rect x="661" y="420" width="6" height="1" fill="#4a3626"/><rect x="661" y="422" width="6" height="1" fill="#3a2a1c"/><rect x="661" y="424" width="6" height="1" fill="#5e4834"/><rect x="661" y="426" width="6" height="1" fill="#5e4834"/><rect x="661" y="428" width="6" height="1" fill="#5e4834"/><rect x="661" y="430" width="6" height="1" fill="#4a3626"/><rect x="661" y="432" width="6" height="1" fill="#5e4834"/><rect x="661" y="434" width="6" height="1" fill="#3a2a1c"/><rect x="661" y="436" width="6" height="1" fill="#5e4834"/><rect x="661" y="438" width="6" height="1" fill="#5e4834"/><rect x="661" y="440" width="6" height="1" fill="#5e4834"/><rect x="661" y="442" width="6" height="1" fill="#5e4834"/><rect x="661" y="444" width="6" height="1" fill="#4a3626"/><rect x="661" y="27" width="1" height="419" fill="#2a1c12" opacity=".35"/><rect x="666" y="27" width="1" height="419" fill="#2a1c12" opacity=".35"/><rect x="468" y="87" width="193" height="24" fill="url(#mC)"/><rect x="667" y="87" width="181" height="24" fill="url(#mD)"/><rect x="468" y="110" width="193" height="1" fill="#d8d8d8" opacity=".6"/><rect x="667" y="110" width="181" height="1" fill="#d8d8d8" opacity=".6"/><rect x="468" y="235" width="193" height="23" fill="url(#mC)"/><rect x="667" y="235" width="181" height="23" fill="url(#mD)"/><rect x="468" y="257" width="193" height="1" fill="#d8d8d8" opacity=".6"/><rect x="667" y="257" width="181" height="1" fill="#d8d8d8" opacity=".6"/><rect x="468" y="373" width="193" height="24" fill="url(#mC)"/><rect x="667" y="373" width="181" height="24" fill="url(#mD)"/><rect x="468" y="396" width="193" height="1" fill="#d8d8d8" opacity=".6"/><rect x="667" y="396" width="181" height="1" fill="#d8d8d8" opacity=".6"/><rect x="425" y="27" width="43" height="419" fill="#ba9678"/><svg x="425" y="27" width="43" height="419" overflow="hidden"><rect x="-12" y="0" width="20" height="6" fill="#b74425"/><rect x="-12" y="5" width="20" height="1" fill="#922f1a"/><rect x="-4" y="1" width="7" height="3" fill="#8e2f1a"/><rect x="-12" y="0" width="4" height="1" fill="#c5552f"/><rect x="9" y="0" width="8" height="6" fill="#b64325"/><rect x="9" y="5" width="8" height="1" fill="#912f1a"/><rect x="18" y="0" width="20" height="6" fill="#d04729"/><rect x="18" y="5" width="20" height="1" fill="#a6321d"/><rect x="39" y="0" width="20" height="6" fill="#db482a"/><rect x="39" y="5" width="20" height="1" fill="#af321e"/><rect x="39" y="3" width="4" height="3" fill="#ab321e"/><rect x="-11" y="7" width="18" height="6" fill="#aa3921"/><rect x="-11" y="12" width="18" height="1" fill="#882817"/><rect x="-8" y="8" width="8" height="3" fill="#842817"/><rect x="8" y="7" width="8" height="6" fill="#da4e29"/><rect x="8" y="12" width="8" height="1" fill="#ae361c"/><rect x="9" y="8" width="7" height="2" fill="#aa361c"/><rect x="17" y="7" width="18" height="6" fill="#bd4221"/><rect x="17" y="12" width="18" height="1" fill="#972e17"/><rect x="28" y="10" width="2" height="1" fill="#cc5229"/><rect x="36" y="7" width="18" height="6" fill="#a3381e"/><rect x="36" y="12" width="18" height="1" fill="#832715"/><rect x="45" y="7" width="4" height="3" fill="#7f2715"/><rect x="41" y="9" width="4" height="1" fill="#b14625"/><rect x="-18" y="14" width="18" height="6" fill="#aa411d"/><rect x="-18" y="19" width="18" height="1" fill="#882d14"/><rect x="-16" y="14" width="8" height="3" fill="#842d14"/><rect x="1" y="14" width="18" height="6" fill="#bf4522"/><rect x="1" y="19" width="18" height="1" fill="#983018"/><rect x="20" y="14" width="18" height="6" fill="#cf4325"/><rect x="20" y="19" width="18" height="1" fill="#a62e1a"/><rect x="26" y="17" width="3" height="2" fill="#a22e1a"/><rect x="24" y="16" width="2" height="1" fill="#e0532e"/><rect x="39" y="14" width="18" height="6" fill="#ad4021"/><rect x="39" y="19" width="18" height="1" fill="#8a2d17"/><rect x="41" y="17" width="3" height="2" fill="#872d17"/><rect x="49" y="18" width="5" height="1" fill="#bb5129"/><rect x="1" y="21" width="18" height="6" fill="#d84726"/><rect x="1" y="26" width="18" height="1" fill="#ad311b"/><rect x="20" y="21" width="18" height="6" fill="#b23b22"/><rect x="20" y="26" width="18" height="1" fill="#8f2918"/><rect x="30" y="22" width="8" height="1" fill="#8b2918"/><rect x="39" y="21" width="18" height="6" fill="#cd4622"/><rect x="39" y="26" width="18" height="1" fill="#a43118"/><rect x="41" y="22" width="4" height="1" fill="#a03118"/><rect x="-4" y="28" width="18" height="6" fill="#cc4021"/><rect x="-4" y="33" width="18" height="1" fill="#a32d17"/><rect x="0" y="30" width="6" height="2" fill="#9f2d17"/><rect x="15" y="28" width="8" height="6" fill="#a53920"/><rect x="15" y="33" width="8" height="1" fill="#842716"/><rect x="15" y="28" width="5" height="1" fill="#b24728"/><rect x="24" y="28" width="18" height="6" fill="#d64b2a"/><rect x="24" y="33" width="18" height="1" fill="#ab341d"/><rect x="35" y="30" width="8" height="1" fill="#a7341d"/><rect x="26" y="30" width="4" height="1" fill="#e75e34"/><rect x="43" y="28" width="8" height="6" fill="#d34a27"/><rect x="43" y="33" width="8" height="1" fill="#a9331b"/><rect x="44" y="30" width="5" height="3" fill="#a4331b"/><rect x="-16" y="35" width="18" height="6" fill="#a63d1c"/><rect x="-16" y="40" width="18" height="1" fill="#842b13"/><rect x="-10" y="35" width="9" height="1" fill="#812b13"/><rect x="3" y="35" width="20" height="6" fill="#d74827"/><rect x="3" y="40" width="20" height="1" fill="#ac331b"/><rect x="13" y="38" width="6" height="3" fill="#a8331b"/><rect x="24" y="35" width="18" height="6" fill="#9d3a1a"/><rect x="24" y="40" width="18" height="1" fill="#7d2812"/><rect x="33" y="38" width="8" height="2" fill="#7a2812"/><rect x="43" y="35" width="18" height="6" fill="#b63c25"/><rect x="43" y="40" width="18" height="1" fill="#922a19"/><rect x="45" y="38" width="4" height="1" fill="#c54b2e"/><rect x="-18" y="42" width="18" height="6" fill="#d34b27"/><rect x="-18" y="47" width="18" height="1" fill="#a9351b"/><rect x="1" y="42" width="20" height="6" fill="#af3c1e"/><rect x="1" y="47" width="20" height="1" fill="#8c2a15"/><rect x="9" y="42" width="4" height="2" fill="#882a15"/><rect x="13" y="43" width="2" height="1" fill="#bd4b26"/><rect x="22" y="42" width="8" height="6" fill="#aa3c1e"/><rect x="22" y="47" width="8" height="1" fill="#882a15"/><rect x="31" y="42" width="18" height="6" fill="#c94426"/><rect x="31" y="47" width="18" height="1" fill="#a1301b"/><rect x="1" y="49" width="18" height="6" fill="#c54826"/><rect x="1" y="54" width="18" height="1" fill="#9e321a"/><rect x="12" y="51" width="5" height="1" fill="#d55a2f"/><rect x="20" y="49" width="18" height="6" fill="#dc4b29"/><rect x="20" y="54" width="18" height="1" fill="#b0341c"/><rect x="22" y="52" width="7" height="2" fill="#ab341c"/><rect x="23" y="49" width="4" height="1" fill="#ed5e33"/><rect x="39" y="49" width="20" height="6" fill="#de4628"/><rect x="39" y="54" width="20" height="1" fill="#b2311c"/><rect x="48" y="52" width="8" height="2" fill="#ad311c"/><rect x="39" y="53" width="3" height="1" fill="#f05832"/><rect x="-2" y="56" width="18" height="6" fill="#a9351c"/><rect x="-2" y="61" width="18" height="1" fill="#872513"/><rect x="17" y="56" width="18" height="6" fill="#bb3f22"/><rect x="17" y="61" width="18" height="1" fill="#962c18"/><rect x="29" y="60" width="5" height="1" fill="#ca4e2b"/><rect x="36" y="56" width="18" height="6" fill="#c44527"/><rect x="36" y="61" width="18" height="1" fill="#9d301b"/><rect x="-3" y="63" width="18" height="6" fill="#bf4222"/><rect x="-3" y="68" width="18" height="1" fill="#992e18"/><rect x="16" y="63" width="18" height="6" fill="#ae3a21"/><rect x="16" y="68" width="18" height="1" fill="#8b2817"/><rect x="17" y="64" width="2" height="1" fill="#bc4929"/><rect x="35" y="63" width="20" height="6" fill="#d34824"/><rect x="35" y="68" width="20" height="1" fill="#a93219"/><rect x="-11" y="70" width="18" height="6" fill="#9d351b"/><rect x="-11" y="75" width="18" height="1" fill="#7d2513"/><rect x="-8" y="73" width="3" height="2" fill="#7a2513"/><rect x="8" y="70" width="18" height="6" fill="#c24324"/><rect x="8" y="75" width="18" height="1" fill="#9b2f19"/><rect x="13" y="73" width="5" height="1" fill="#d1542d"/><rect x="27" y="70" width="18" height="6" fill="#d64425"/><rect x="27" y="75" width="18" height="1" fill="#ab301a"/><rect x="37" y="70" width="5" height="2" fill="#a7301a"/><rect x="34" y="72" width="2" height="1" fill="#e8562f"/><rect x="-10" y="77" width="18" height="6" fill="#c84725"/><rect x="-10" y="82" width="18" height="1" fill="#a0321a"/><rect x="-2" y="80" width="4" height="1" fill="#9c321a"/><rect x="9" y="77" width="8" height="6" fill="#b04023"/><rect x="9" y="82" width="8" height="1" fill="#8d2d19"/><rect x="10" y="79" width="4" height="1" fill="#be502c"/><rect x="18" y="77" width="8" height="6" fill="#a1381f"/><rect x="18" y="82" width="8" height="1" fill="#802715"/><rect x="18" y="77" width="4" height="3" fill="#7d2715"/><rect x="27" y="77" width="8" height="6" fill="#ad3f21"/><rect x="27" y="82" width="8" height="1" fill="#8a2c17"/><rect x="28" y="78" width="8" height="1" fill="#872c17"/><rect x="36" y="77" width="18" height="6" fill="#d14923"/><rect x="36" y="82" width="18" height="1" fill="#a73318"/><rect x="48" y="79" width="5" height="1" fill="#e25b2c"/><rect x="-8" y="84" width="20" height="6" fill="#a3351b"/><rect x="-8" y="89" width="20" height="1" fill="#832513"/><rect x="4" y="86" width="7" height="2" fill="#7f2513"/><rect x="-1" y="88" width="5" height="1" fill="#b14322"/><rect x="13" y="84" width="20" height="6" fill="#a03b1d"/><rect x="13" y="89" width="20" height="1" fill="#802914"/><rect x="19" y="87" width="7" height="3" fill="#7c2914"/><rect x="34" y="84" width="18" height="6" fill="#ce4528"/><rect x="34" y="89" width="18" height="1" fill="#a5301c"/><rect x="-5" y="91" width="8" height="6" fill="#db4525"/><rect x="-5" y="96" width="8" height="1" fill="#af301a"/><rect x="-3" y="91" width="4" height="1" fill="#ec562f"/><rect x="4" y="91" width="20" height="6" fill="#a93b21"/><rect x="4" y="96" width="20" height="1" fill="#872917"/><rect x="14" y="93" width="8" height="3" fill="#832917"/><rect x="25" y="91" width="18" height="6" fill="#d34729"/><rect x="25" y="96" width="18" height="1" fill="#a9311d"/><rect x="34" y="91" width="8" height="1" fill="#a5311d"/><rect x="-13" y="98" width="18" height="6" fill="#c44024"/><rect x="-13" y="103" width="18" height="1" fill="#9d2d19"/><rect x="6" y="98" width="18" height="6" fill="#b84123"/><rect x="6" y="103" width="18" height="1" fill="#932e18"/><rect x="25" y="98" width="18" height="6" fill="#a1361a"/><rect x="25" y="103" width="18" height="1" fill="#802612"/><rect x="-1" y="105" width="18" height="6" fill="#ba4521"/><rect x="-1" y="110" width="18" height="1" fill="#953017"/><rect x="2" y="105" width="6" height="1" fill="#913017"/><rect x="-1" y="109" width="3" height="1" fill="#c95729"/><rect x="18" y="105" width="18" height="6" fill="#a83c1c"/><rect x="18" y="110" width="18" height="1" fill="#862a13"/><rect x="19" y="106" width="8" height="3" fill="#832a13"/><rect x="18" y="105" width="3" height="1" fill="#b54b23"/><rect x="37" y="105" width="18" height="6" fill="#c14024"/><rect x="37" y="110" width="18" height="1" fill="#9a2d19"/><rect x="1" y="112" width="18" height="6" fill="#b0421f"/><rect x="1" y="117" width="18" height="1" fill="#8c2e15"/><rect x="8" y="112" width="5" height="1" fill="#be5327"/><rect x="20" y="112" width="8" height="6" fill="#b84324"/><rect x="20" y="117" width="8" height="1" fill="#932f19"/><rect x="21" y="114" width="7" height="1" fill="#902f19"/><rect x="29" y="112" width="18" height="6" fill="#cc4427"/><rect x="29" y="117" width="18" height="1" fill="#a3301b"/><rect x="33" y="112" width="6" height="2" fill="#9f301b"/><rect x="-3" y="119" width="20" height="6" fill="#a5351f"/><rect x="-3" y="124" width="20" height="1" fill="#842516"/><rect x="0" y="119" width="5" height="3" fill="#812516"/><rect x="18" y="119" width="18" height="6" fill="#bb4820"/><rect x="18" y="124" width="18" height="1" fill="#953217"/><rect x="37" y="119" width="18" height="6" fill="#bc4020"/><rect x="37" y="124" width="18" height="1" fill="#962c16"/><rect x="-5" y="126" width="18" height="6" fill="#9c3b1b"/><rect x="-5" y="131" width="18" height="1" fill="#7d2913"/><rect x="5" y="129" width="3" height="1" fill="#a94a22"/><rect x="14" y="126" width="20" height="6" fill="#b93b22"/><rect x="14" y="131" width="20" height="1" fill="#942918"/><rect x="25" y="129" width="3" height="1" fill="#c8492b"/><rect x="35" y="126" width="18" height="6" fill="#bb411f"/><rect x="35" y="131" width="18" height="1" fill="#952d16"/><rect x="-1" y="133" width="18" height="6" fill="#b43a1e"/><rect x="-1" y="138" width="18" height="1" fill="#902815"/><rect x="5" y="133" width="4" height="1" fill="#c24826"/><rect x="18" y="133" width="18" height="6" fill="#b13e1d"/><rect x="18" y="138" width="18" height="1" fill="#8e2b14"/><rect x="18" y="134" width="9" height="2" fill="#8a2b14"/><rect x="37" y="133" width="18" height="6" fill="#cb4222"/><rect x="37" y="138" width="18" height="1" fill="#a22e17"/><rect x="-8" y="140" width="18" height="6" fill="#bb4525"/><rect x="-8" y="145" width="18" height="1" fill="#95301a"/><rect x="-7" y="143" width="3" height="1" fill="#92301a"/><rect x="11" y="140" width="18" height="6" fill="#aa3c22"/><rect x="11" y="145" width="18" height="1" fill="#882a17"/><rect x="17" y="140" width="5" height="2" fill="#852a17"/><rect x="17" y="142" width="5" height="1" fill="#b84b2a"/><rect x="30" y="140" width="20" height="6" fill="#df4826"/><rect x="30" y="145" width="20" height="1" fill="#b2321b"/><rect x="-10" y="147" width="18" height="6" fill="#cb4226"/><rect x="-10" y="152" width="18" height="1" fill="#a32e1b"/><rect x="-5" y="147" width="4" height="2" fill="#9f2e1b"/><rect x="9" y="147" width="8" height="6" fill="#a3331d"/><rect x="9" y="152" width="8" height="1" fill="#822314"/><rect x="18" y="147" width="18" height="6" fill="#c34821"/><rect x="18" y="152" width="18" height="1" fill="#9c3217"/><rect x="37" y="147" width="18" height="6" fill="#b63c23"/><rect x="37" y="152" width="18" height="1" fill="#922a18"/><rect x="48" y="147" width="4" height="2" fill="#8e2a18"/><rect x="-8" y="154" width="18" height="6" fill="#cd4d27"/><rect x="-8" y="159" width="18" height="1" fill="#a4361b"/><rect x="11" y="154" width="20" height="6" fill="#cf4226"/><rect x="11" y="159" width="20" height="1" fill="#a62e1a"/><rect x="32" y="154" width="18" height="6" fill="#a63821"/><rect x="32" y="159" width="18" height="1" fill="#852717"/><rect x="40" y="154" width="7" height="1" fill="#812717"/><rect x="1" y="161" width="18" height="6" fill="#c33c26"/><rect x="1" y="166" width="18" height="1" fill="#9c2a1a"/><rect x="20" y="161" width="18" height="6" fill="#a23e20"/><rect x="20" y="166" width="18" height="1" fill="#822b17"/><rect x="39" y="161" width="18" height="6" fill="#a83e1c"/><rect x="39" y="166" width="18" height="1" fill="#862b14"/><rect x="41" y="162" width="6" height="3" fill="#832b14"/><rect x="-7" y="168" width="18" height="6" fill="#bb3e21"/><rect x="-7" y="173" width="18" height="1" fill="#952b17"/><rect x="12" y="168" width="18" height="6" fill="#bc4120"/><rect x="12" y="173" width="18" height="1" fill="#962d16"/><rect x="31" y="168" width="18" height="6" fill="#c94727"/><rect x="31" y="173" width="18" height="1" fill="#a1321b"/><rect x="-7" y="175" width="18" height="6" fill="#d04628"/><rect x="-7" y="180" width="18" height="1" fill="#a6311c"/><rect x="4" y="176" width="5" height="2" fill="#a2311c"/><rect x="12" y="175" width="8" height="6" fill="#b03721"/><rect x="12" y="180" width="8" height="1" fill="#8c2717"/><rect x="21" y="175" width="18" height="6" fill="#be4921"/><rect x="21" y="180" width="18" height="1" fill="#983317"/><rect x="29" y="176" width="8" height="2" fill="#943317"/><rect x="40" y="175" width="20" height="6" fill="#d54b24"/><rect x="40" y="180" width="20" height="1" fill="#aa3419"/><rect x="51" y="177" width="6" height="2" fill="#a63419"/><rect x="48" y="178" width="5" height="1" fill="#e65e2d"/><rect x="-8" y="182" width="8" height="6" fill="#cb4923"/><rect x="-8" y="187" width="8" height="1" fill="#a23319"/><rect x="1" y="182" width="8" height="6" fill="#a43d1b"/><rect x="1" y="187" width="8" height="1" fill="#832b13"/><rect x="2" y="183" width="4" height="3" fill="#7f2b13"/><rect x="1" y="182" width="2" height="1" fill="#b14c22"/><rect x="10" y="182" width="20" height="6" fill="#c24320"/><rect x="10" y="187" width="20" height="1" fill="#9b2e16"/><rect x="23" y="184" width="6" height="1" fill="#972e16"/><rect x="31" y="182" width="18" height="6" fill="#ab3c1e"/><rect x="31" y="187" width="18" height="1" fill="#892a15"/><rect x="37" y="184" width="3" height="3" fill="#852a15"/><rect x="-15" y="189" width="18" height="6" fill="#aa3321"/><rect x="-15" y="194" width="18" height="1" fill="#882417"/><rect x="4" y="189" width="18" height="6" fill="#d24428"/><rect x="4" y="194" width="18" height="1" fill="#a82f1c"/><rect x="12" y="191" width="4" height="2" fill="#a42f1c"/><rect x="23" y="189" width="18" height="6" fill="#ae3c22"/><rect x="23" y="194" width="18" height="1" fill="#8b2a17"/><rect x="42" y="189" width="8" height="6" fill="#d24a23"/><rect x="42" y="194" width="8" height="1" fill="#a83418"/><rect x="-7" y="196" width="18" height="6" fill="#ba4522"/><rect x="-7" y="201" width="18" height="1" fill="#953017"/><rect x="12" y="196" width="18" height="6" fill="#b54424"/><rect x="12" y="201" width="18" height="1" fill="#913019"/><rect x="17" y="198" width="9" height="2" fill="#8d3019"/><rect x="31" y="196" width="18" height="6" fill="#d94a29"/><rect x="31" y="201" width="18" height="1" fill="#ad331d"/><rect x="-14" y="203" width="18" height="6" fill="#d84624"/><rect x="-14" y="208" width="18" height="1" fill="#ad3119"/><rect x="-12" y="204" width="7" height="3" fill="#a83119"/><rect x="5" y="203" width="18" height="6" fill="#b53f24"/><rect x="5" y="208" width="18" height="1" fill="#912c19"/><rect x="6" y="204" width="3" height="3" fill="#8d2c19"/><rect x="24" y="203" width="20" height="6" fill="#de4b26"/><rect x="24" y="208" width="20" height="1" fill="#b1351a"/><rect x="27" y="203" width="4" height="3" fill="#ad351a"/><rect x="0" y="210" width="18" height="6" fill="#c74724"/><rect x="0" y="215" width="18" height="1" fill="#9f3119"/><rect x="19" y="210" width="18" height="6" fill="#da4e29"/><rect x="19" y="215" width="18" height="1" fill="#ae361c"/><rect x="22" y="213" width="9" height="2" fill="#aa361c"/><rect x="38" y="210" width="18" height="6" fill="#b6411d"/><rect x="38" y="215" width="18" height="1" fill="#922d14"/><rect x="45" y="214" width="5" height="1" fill="#c55125"/><rect x="-9" y="217" width="20" height="6" fill="#c03c25"/><rect x="-9" y="222" width="20" height="1" fill="#992a1a"/><rect x="12" y="217" width="18" height="6" fill="#cd4a22"/><rect x="12" y="222" width="18" height="1" fill="#a43418"/><rect x="12" y="219" width="3" height="1" fill="#dd5d2b"/><rect x="31" y="217" width="18" height="6" fill="#c33f21"/><rect x="31" y="222" width="18" height="1" fill="#9c2c17"/><rect x="41" y="217" width="9" height="3" fill="#982c17"/><rect x="-14" y="224" width="18" height="6" fill="#cf4827"/><rect x="-14" y="229" width="18" height="1" fill="#a5321b"/><rect x="-4" y="226" width="3" height="1" fill="#df5a31"/><rect x="5" y="224" width="18" height="6" fill="#a83c1f"/><rect x="5" y="229" width="18" height="1" fill="#862a16"/><rect x="13" y="224" width="5" height="1" fill="#b54b27"/><rect x="24" y="224" width="18" height="6" fill="#d7482a"/><rect x="24" y="229" width="18" height="1" fill="#ac321e"/><rect x="34" y="225" width="6" height="3" fill="#a8321e"/><rect x="43" y="224" width="18" height="6" fill="#a93b1b"/><rect x="43" y="229" width="18" height="1" fill="#872913"/><rect x="53" y="226" width="5" height="2" fill="#842913"/><rect x="-7" y="231" width="18" height="6" fill="#b44322"/><rect x="-7" y="236" width="18" height="1" fill="#902f17"/><rect x="12" y="231" width="8" height="6" fill="#a3341b"/><rect x="12" y="236" width="8" height="1" fill="#822413"/><rect x="21" y="231" width="18" height="6" fill="#c64120"/><rect x="21" y="236" width="18" height="1" fill="#9f2d16"/><rect x="40" y="231" width="18" height="6" fill="#aa391e"/><rect x="40" y="236" width="18" height="1" fill="#882815"/><rect x="-12" y="238" width="20" height="6" fill="#c44a24"/><rect x="-12" y="243" width="20" height="1" fill="#9d3319"/><rect x="-5" y="238" width="7" height="3" fill="#993319"/><rect x="9" y="238" width="18" height="6" fill="#b54520"/><rect x="9" y="243" width="18" height="1" fill="#913016"/><rect x="19" y="239" width="3" height="2" fill="#8d3016"/><rect x="28" y="238" width="20" height="6" fill="#c74b27"/><rect x="28" y="243" width="20" height="1" fill="#9f341b"/><rect x="41" y="241" width="4" height="3" fill="#9b341b"/><rect x="-18" y="245" width="18" height="6" fill="#cd4824"/><rect x="-18" y="250" width="18" height="1" fill="#a43219"/><rect x="-16" y="248" width="9" height="3" fill="#a03219"/><rect x="1" y="245" width="8" height="6" fill="#de4a26"/><rect x="1" y="250" width="8" height="1" fill="#b2331a"/><rect x="2" y="246" width="7" height="1" fill="#ad331a"/><rect x="10" y="245" width="18" height="6" fill="#b23b21"/><rect x="10" y="250" width="18" height="1" fill="#8e2917"/><rect x="10" y="248" width="5" height="2" fill="#8b2917"/><rect x="22" y="246" width="2" height="1" fill="#c04a2a"/><rect x="29" y="245" width="18" height="6" fill="#ae401b"/><rect x="29" y="250" width="18" height="1" fill="#8b2d13"/><rect x="-18" y="252" width="18" height="6" fill="#9d3320"/><rect x="-18" y="257" width="18" height="1" fill="#7d2417"/><rect x="-9" y="252" width="4" height="2" fill="#7a2417"/><rect x="1" y="252" width="8" height="6" fill="#ae3f23"/><rect x="1" y="257" width="8" height="1" fill="#8b2c18"/><rect x="10" y="252" width="18" height="6" fill="#a33d21"/><rect x="10" y="257" width="18" height="1" fill="#822a17"/><rect x="29" y="252" width="8" height="6" fill="#a0371d"/><rect x="29" y="257" width="8" height="1" fill="#802614"/><rect x="38" y="252" width="8" height="6" fill="#c1481f"/><rect x="38" y="257" width="8" height="1" fill="#9a3216"/><rect x="38" y="253" width="5" height="2" fill="#963216"/><rect x="-13" y="259" width="18" height="6" fill="#b43d1f"/><rect x="-13" y="264" width="18" height="1" fill="#902b16"/><rect x="6" y="259" width="8" height="6" fill="#d54a29"/><rect x="6" y="264" width="8" height="1" fill="#aa331c"/><rect x="15" y="259" width="18" height="6" fill="#a43420"/><rect x="15" y="264" width="18" height="1" fill="#832516"/><rect x="26" y="260" width="9" height="2" fill="#802516"/><rect x="34" y="259" width="18" height="6" fill="#b33a1e"/><rect x="34" y="264" width="18" height="1" fill="#8f2815"/><rect x="41" y="262" width="7" height="1" fill="#8c2815"/><rect x="-17" y="266" width="8" height="6" fill="#a33d1b"/><rect x="-17" y="271" width="8" height="1" fill="#822b13"/><rect x="-16" y="268" width="9" height="1" fill="#7f2b13"/><rect x="-16" y="270" width="5" height="1" fill="#b04d22"/><rect x="-8" y="266" width="18" height="6" fill="#a73f1c"/><rect x="-8" y="271" width="18" height="1" fill="#852c13"/><rect x="1" y="269" width="2" height="1" fill="#b44e23"/><rect x="11" y="266" width="20" height="6" fill="#db4726"/><rect x="11" y="271" width="20" height="1" fill="#af321a"/><rect x="18" y="267" width="9" height="3" fill="#ab321a"/><rect x="32" y="266" width="18" height="6" fill="#a7381f"/><rect x="32" y="271" width="18" height="1" fill="#852716"/><rect x="41" y="268" width="7" height="1" fill="#822716"/><rect x="-5" y="273" width="20" height="6" fill="#c44225"/><rect x="-5" y="278" width="20" height="1" fill="#9c2e1a"/><rect x="16" y="273" width="18" height="6" fill="#d14626"/><rect x="16" y="278" width="18" height="1" fill="#a7311a"/><rect x="35" y="273" width="18" height="6" fill="#b7411c"/><rect x="35" y="278" width="18" height="1" fill="#922d13"/><rect x="-13" y="280" width="18" height="6" fill="#c14522"/><rect x="-13" y="285" width="18" height="1" fill="#9a3018"/><rect x="6" y="280" width="18" height="6" fill="#b73d25"/><rect x="6" y="285" width="18" height="1" fill="#922a1a"/><rect x="10" y="282" width="3" height="1" fill="#c54c2e"/><rect x="25" y="280" width="8" height="6" fill="#b84423"/><rect x="25" y="285" width="8" height="1" fill="#933018"/><rect x="25" y="283" width="7" height="1" fill="#8f3018"/><rect x="34" y="280" width="18" height="6" fill="#a83f1f"/><rect x="34" y="285" width="18" height="1" fill="#862c16"/><rect x="-14" y="287" width="18" height="6" fill="#a0341f"/><rect x="-14" y="292" width="18" height="1" fill="#802415"/><rect x="5" y="287" width="18" height="6" fill="#cf4323"/><rect x="5" y="292" width="18" height="1" fill="#a62f18"/><rect x="13" y="288" width="8" height="1" fill="#a22f18"/><rect x="24" y="287" width="8" height="6" fill="#b23f1c"/><rect x="24" y="292" width="8" height="1" fill="#8e2c13"/><rect x="25" y="290" width="5" height="1" fill="#8b2c13"/><rect x="33" y="287" width="18" height="6" fill="#a3331e"/><rect x="33" y="292" width="18" height="1" fill="#822415"/><rect x="37" y="290" width="4" height="1" fill="#7f2415"/><rect x="33" y="287" width="3" height="1" fill="#b04025"/><rect x="-1" y="294" width="18" height="6" fill="#c04326"/><rect x="-1" y="299" width="18" height="1" fill="#9a2f1a"/><rect x="18" y="294" width="18" height="6" fill="#b8451f"/><rect x="18" y="299" width="18" height="1" fill="#933015"/><rect x="37" y="294" width="8" height="6" fill="#b03f20"/><rect x="37" y="299" width="8" height="1" fill="#8d2c16"/><rect x="37" y="295" width="8" height="1" fill="#892c16"/><rect x="37" y="297" width="3" height="1" fill="#be4f28"/><rect x="-11" y="301" width="18" height="6" fill="#a3351e"/><rect x="-11" y="306" width="18" height="1" fill="#822515"/><rect x="8" y="301" width="18" height="6" fill="#c14421"/><rect x="8" y="306" width="18" height="1" fill="#9b3017"/><rect x="27" y="301" width="18" height="6" fill="#a53e1a"/><rect x="27" y="306" width="18" height="1" fill="#842b12"/><rect x="34" y="301" width="4" height="1" fill="#b24e21"/><rect x="-4" y="308" width="18" height="6" fill="#b04021"/><rect x="-4" y="313" width="18" height="1" fill="#8c2d17"/><rect x="15" y="308" width="20" height="6" fill="#bd471f"/><rect x="15" y="313" width="20" height="1" fill="#973215"/><rect x="36" y="308" width="20" height="6" fill="#c54127"/><rect x="36" y="313" width="20" height="1" fill="#9e2d1b"/><rect x="-17" y="315" width="18" height="6" fill="#e04e26"/><rect x="-17" y="320" width="18" height="1" fill="#b3361b"/><rect x="2" y="315" width="8" height="6" fill="#c74825"/><rect x="2" y="320" width="8" height="1" fill="#9f321a"/><rect x="3" y="315" width="9" height="2" fill="#9b321a"/><rect x="11" y="315" width="18" height="6" fill="#b53923"/><rect x="11" y="320" width="18" height="1" fill="#912719"/><rect x="30" y="315" width="18" height="6" fill="#c84327"/><rect x="30" y="320" width="18" height="1" fill="#a02f1b"/><rect x="32" y="318" width="2" height="1" fill="#d85430"/><rect x="-11" y="322" width="18" height="6" fill="#a5361d"/><rect x="-11" y="327" width="18" height="1" fill="#842614"/><rect x="8" y="322" width="18" height="6" fill="#c03e20"/><rect x="8" y="327" width="18" height="1" fill="#992b17"/><rect x="27" y="322" width="18" height="6" fill="#b33923"/><rect x="27" y="327" width="18" height="1" fill="#8f2819"/><rect x="29" y="322" width="3" height="1" fill="#8b2819"/><rect x="-10" y="329" width="18" height="6" fill="#aa3b21"/><rect x="-10" y="334" width="18" height="1" fill="#882917"/><rect x="-3" y="330" width="7" height="1" fill="#852917"/><rect x="9" y="329" width="18" height="6" fill="#d74729"/><rect x="9" y="334" width="18" height="1" fill="#ac321c"/><rect x="28" y="329" width="18" height="6" fill="#ad3720"/><rect x="28" y="334" width="18" height="1" fill="#8a2616"/><rect x="31" y="329" width="8" height="2" fill="#862616"/><rect x="-4" y="336" width="18" height="6" fill="#d74b29"/><rect x="-4" y="341" width="18" height="1" fill="#ac351c"/><rect x="2" y="338" width="3" height="1" fill="#a7351c"/><rect x="-4" y="336" width="5" height="1" fill="#e85e33"/><rect x="15" y="336" width="18" height="6" fill="#c23d24"/><rect x="15" y="341" width="18" height="1" fill="#9b2a19"/><rect x="17" y="340" width="5" height="1" fill="#d24c2d"/><rect x="34" y="336" width="18" height="6" fill="#d54825"/><rect x="34" y="341" width="18" height="1" fill="#aa321a"/><rect x="-3" y="343" width="20" height="6" fill="#c74625"/><rect x="-3" y="348" width="20" height="1" fill="#9f311a"/><rect x="-3" y="343" width="4" height="2" fill="#9b311a"/><rect x="8" y="344" width="2" height="1" fill="#d7572f"/><rect x="18" y="343" width="20" height="6" fill="#c84026"/><rect x="18" y="348" width="20" height="1" fill="#a02d1a"/><rect x="39" y="343" width="18" height="6" fill="#aa3720"/><rect x="39" y="348" width="18" height="1" fill="#882716"/><rect x="-9" y="350" width="18" height="6" fill="#c94526"/><rect x="-9" y="355" width="18" height="1" fill="#a1301a"/><rect x="0" y="351" width="3" height="3" fill="#9d301a"/><rect x="10" y="350" width="18" height="6" fill="#c34627"/><rect x="10" y="355" width="18" height="1" fill="#9c311b"/><rect x="18" y="352" width="3" height="1" fill="#98311b"/><rect x="29" y="350" width="18" height="6" fill="#d24c28"/><rect x="29" y="355" width="18" height="1" fill="#a8351c"/><rect x="31" y="351" width="5" height="2" fill="#a4351c"/><rect x="-5" y="357" width="18" height="6" fill="#d94827"/><rect x="-5" y="362" width="18" height="1" fill="#ae331b"/><rect x="0" y="358" width="7" height="2" fill="#a9331b"/><rect x="14" y="357" width="18" height="6" fill="#bb3d20"/><rect x="14" y="362" width="18" height="1" fill="#952a17"/><rect x="33" y="357" width="8" height="6" fill="#b93c22"/><rect x="33" y="362" width="8" height="1" fill="#942a18"/><rect x="35" y="358" width="2" height="1" fill="#c84b2a"/><rect x="42" y="357" width="18" height="6" fill="#db4729"/><rect x="42" y="362" width="18" height="1" fill="#af321d"/><rect x="53" y="357" width="2" height="1" fill="#ec5934"/><rect x="1" y="364" width="18" height="6" fill="#d74625"/><rect x="1" y="369" width="18" height="1" fill="#ac3119"/><rect x="6" y="367" width="2" height="1" fill="#e8582e"/><rect x="20" y="364" width="18" height="6" fill="#be4127"/><rect x="20" y="369" width="18" height="1" fill="#982d1b"/><rect x="29" y="365" width="5" height="3" fill="#942d1b"/><rect x="39" y="364" width="18" height="6" fill="#c04724"/><rect x="39" y="369" width="18" height="1" fill="#9a3219"/><rect x="-9" y="371" width="18" height="6" fill="#bc4323"/><rect x="-9" y="376" width="18" height="1" fill="#962f18"/><rect x="10" y="371" width="18" height="6" fill="#bf4623"/><rect x="10" y="376" width="18" height="1" fill="#993118"/><rect x="29" y="371" width="18" height="6" fill="#aa3c1b"/><rect x="29" y="376" width="18" height="1" fill="#882a13"/><rect x="-17" y="378" width="20" height="6" fill="#dd4629"/><rect x="-17" y="383" width="20" height="1" fill="#b1311d"/><rect x="4" y="378" width="18" height="6" fill="#e04c24"/><rect x="4" y="383" width="18" height="1" fill="#b33519"/><rect x="4" y="378" width="8" height="3" fill="#af3519"/><rect x="23" y="378" width="18" height="6" fill="#d24725"/><rect x="23" y="383" width="18" height="1" fill="#a83219"/><rect x="34" y="380" width="8" height="3" fill="#a43219"/><rect x="42" y="378" width="18" height="6" fill="#a43a21"/><rect x="42" y="383" width="18" height="1" fill="#832817"/><rect x="53" y="381" width="9" height="3" fill="#802817"/><rect x="0" y="385" width="18" height="6" fill="#a6381f"/><rect x="0" y="390" width="18" height="1" fill="#852716"/><rect x="4" y="387" width="4" height="3" fill="#812716"/><rect x="19" y="385" width="20" height="6" fill="#c84927"/><rect x="19" y="390" width="20" height="1" fill="#a0331b"/><rect x="40" y="385" width="8" height="6" fill="#c03d25"/><rect x="40" y="390" width="8" height="1" fill="#992b1a"/><rect x="40" y="388" width="4" height="1" fill="#cf4d2e"/><rect x="-8" y="392" width="20" height="6" fill="#d34c24"/><rect x="-8" y="397" width="20" height="1" fill="#a93519"/><rect x="-2" y="394" width="4" height="2" fill="#a43519"/><rect x="13" y="392" width="18" height="6" fill="#cb4426"/><rect x="13" y="397" width="18" height="1" fill="#a32f1a"/><rect x="17" y="393" width="3" height="1" fill="#9f2f1a"/><rect x="32" y="392" width="18" height="6" fill="#cb3f26"/><rect x="32" y="397" width="18" height="1" fill="#a32c1a"/><rect x="40" y="393" width="7" height="2" fill="#9e2c1a"/><rect x="44" y="396" width="3" height="1" fill="#dc4f30"/><rect x="-2" y="399" width="18" height="6" fill="#bb4022"/><rect x="-2" y="404" width="18" height="1" fill="#962c17"/><rect x="9" y="403" width="2" height="1" fill="#cb502a"/><rect x="17" y="399" width="18" height="6" fill="#a93a1e"/><rect x="17" y="404" width="18" height="1" fill="#872915"/><rect x="22" y="399" width="5" height="1" fill="#842915"/><rect x="36" y="399" width="18" height="6" fill="#d04b23"/><rect x="36" y="404" width="18" height="1" fill="#a73419"/><rect x="46" y="401" width="3" height="3" fill="#a23419"/><rect x="45" y="400" width="5" height="1" fill="#e15e2c"/><rect x="-18" y="406" width="18" height="6" fill="#ae391d"/><rect x="-18" y="411" width="18" height="1" fill="#8b2814"/><rect x="-16" y="409" width="3" height="2" fill="#882814"/><rect x="1" y="406" width="18" height="6" fill="#b94224"/><rect x="1" y="411" width="18" height="1" fill="#942e19"/><rect x="4" y="409" width="8" height="1" fill="#912e19"/><rect x="20" y="406" width="18" height="6" fill="#c54520"/><rect x="20" y="411" width="18" height="1" fill="#9d3016"/><rect x="31" y="408" width="5" height="3" fill="#993016"/><rect x="20" y="406" width="4" height="1" fill="#d55728"/><rect x="39" y="406" width="18" height="6" fill="#a2341d"/><rect x="39" y="411" width="18" height="1" fill="#822514"/><rect x="0" y="413" width="8" height="6" fill="#d64629"/><rect x="0" y="418" width="8" height="1" fill="#ab311d"/><rect x="9" y="413" width="18" height="6" fill="#aa3f20"/><rect x="9" y="418" width="18" height="1" fill="#882c16"/><rect x="14" y="415" width="3" height="3" fill="#842c16"/><rect x="28" y="413" width="18" height="6" fill="#d04723"/><rect x="28" y="418" width="18" height="1" fill="#a63118"/><rect x="0" y="0" width="43" height="419" filter="url(#bf)" opacity=".5"/></svg><rect x="848" y="27" width="48" height="419" fill="#ba9678"/><svg x="848" y="27" width="48" height="419" overflow="hidden"><rect x="-8" y="-5" width="19" height="6" fill="#9c351d"/><rect x="-8" y="0" width="19" height="1" fill="#7d2514"/><rect x="12" y="-5" width="19" height="6" fill="#ac361d"/><rect x="12" y="0" width="19" height="1" fill="#892514"/><rect x="32" y="-5" width="9" height="6" fill="#c74824"/><rect x="32" y="0" width="9" height="1" fill="#9f3219"/><rect x="33" y="-4" width="7" height="1" fill="#9b3219"/><rect x="42" y="-5" width="19" height="6" fill="#c84923"/><rect x="42" y="0" width="19" height="1" fill="#a03319"/><rect x="-14" y="2" width="19" height="6" fill="#ce4628"/><rect x="-14" y="7" width="19" height="1" fill="#a5311c"/><rect x="-12" y="4" width="8" height="3" fill="#a1311c"/><rect x="-13" y="2" width="2" height="1" fill="#df5832"/><rect x="6" y="2" width="19" height="6" fill="#9d3821"/><rect x="6" y="7" width="19" height="1" fill="#7e2717"/><rect x="11" y="4" width="7" height="2" fill="#7b2717"/><rect x="26" y="2" width="19" height="6" fill="#bf3e27"/><rect x="26" y="7" width="19" height="1" fill="#992b1b"/><rect x="46" y="2" width="19" height="6" fill="#af411f"/><rect x="46" y="7" width="19" height="1" fill="#8c2d15"/><rect x="53" y="2" width="3" height="3" fill="#882d15"/><rect x="1" y="9" width="19" height="6" fill="#d64f2b"/><rect x="1" y="14" width="19" height="1" fill="#ab371e"/><rect x="21" y="9" width="19" height="6" fill="#ce4d27"/><rect x="21" y="14" width="19" height="1" fill="#a4361b"/><rect x="22" y="11" width="6" height="3" fill="#a0361b"/><rect x="35" y="12" width="4" height="1" fill="#de6130"/><rect x="41" y="9" width="19" height="6" fill="#a43a21"/><rect x="41" y="14" width="19" height="1" fill="#832917"/><rect x="42" y="12" width="3" height="1" fill="#b24929"/><rect x="1" y="16" width="19" height="6" fill="#d24725"/><rect x="1" y="21" width="19" height="1" fill="#a8311a"/><rect x="21" y="16" width="19" height="6" fill="#d04825"/><rect x="21" y="21" width="19" height="1" fill="#a6321a"/><rect x="27" y="18" width="9" height="3" fill="#a2321a"/><rect x="41" y="16" width="19" height="6" fill="#d04b27"/><rect x="41" y="21" width="19" height="1" fill="#a6341b"/><rect x="-6" y="23" width="19" height="6" fill="#d84d2a"/><rect x="-6" y="28" width="19" height="1" fill="#ad361e"/><rect x="2" y="26" width="9" height="2" fill="#a8361e"/><rect x="14" y="23" width="19" height="6" fill="#9c3a1b"/><rect x="14" y="28" width="19" height="1" fill="#7d2813"/><rect x="24" y="23" width="3" height="1" fill="#a94822"/><rect x="34" y="23" width="22" height="6" fill="#bb3c25"/><rect x="34" y="28" width="22" height="1" fill="#952a1a"/><rect x="39" y="25" width="5" height="1" fill="#912a1a"/><rect x="35" y="26" width="5" height="1" fill="#ca4b2f"/><rect x="1" y="30" width="22" height="6" fill="#bb4323"/><rect x="1" y="35" width="22" height="1" fill="#952f18"/><rect x="24" y="30" width="19" height="6" fill="#a33f21"/><rect x="24" y="35" width="19" height="1" fill="#822c17"/><rect x="44" y="30" width="9" height="6" fill="#ab3920"/><rect x="44" y="35" width="9" height="1" fill="#892816"/><rect x="-2" y="37" width="9" height="6" fill="#b84223"/><rect x="-2" y="42" width="9" height="1" fill="#932e19"/><rect x="8" y="37" width="19" height="6" fill="#b43e1d"/><rect x="8" y="42" width="19" height="1" fill="#902b14"/><rect x="28" y="37" width="19" height="6" fill="#c54723"/><rect x="28" y="42" width="19" height="1" fill="#9d3118"/><rect x="48" y="37" width="19" height="6" fill="#ac4223"/><rect x="48" y="42" width="19" height="1" fill="#8a2e18"/><rect x="49" y="38" width="3" height="1" fill="#862e18"/><rect x="-3" y="44" width="22" height="6" fill="#b63b24"/><rect x="-3" y="49" width="22" height="1" fill="#912919"/><rect x="-2" y="44" width="5" height="1" fill="#8e2919"/><rect x="-1" y="45" width="3" height="1" fill="#c5492d"/><rect x="20" y="44" width="19" height="6" fill="#e45028"/><rect x="20" y="49" width="19" height="1" fill="#b6381c"/><rect x="40" y="44" width="22" height="6" fill="#b74126"/><rect x="40" y="49" width="22" height="1" fill="#932e1a"/><rect x="44" y="46" width="6" height="2" fill="#8f2e1a"/><rect x="0" y="51" width="19" height="6" fill="#bb4223"/><rect x="0" y="56" width="19" height="1" fill="#952e19"/><rect x="6" y="54" width="3" height="1" fill="#912e19"/><rect x="20" y="51" width="19" height="6" fill="#b94623"/><rect x="20" y="56" width="19" height="1" fill="#943118"/><rect x="24" y="54" width="3" height="1" fill="#c8582c"/><rect x="40" y="51" width="19" height="6" fill="#d54f29"/><rect x="40" y="56" width="19" height="1" fill="#aa371c"/><rect x="-18" y="58" width="19" height="6" fill="#e14d29"/><rect x="-18" y="63" width="19" height="1" fill="#b4361d"/><rect x="-18" y="61" width="8" height="2" fill="#af361d"/><rect x="2" y="58" width="22" height="6" fill="#9f3d20"/><rect x="2" y="63" width="22" height="1" fill="#7f2a16"/><rect x="25" y="58" width="19" height="6" fill="#c94d29"/><rect x="25" y="63" width="19" height="1" fill="#a1351d"/><rect x="45" y="58" width="19" height="6" fill="#da4e2e"/><rect x="45" y="63" width="19" height="1" fill="#af3620"/><rect x="45" y="62" width="3" height="1" fill="#ec6139"/><rect x="-16" y="65" width="22" height="6" fill="#a9411f"/><rect x="-16" y="70" width="22" height="1" fill="#872d15"/><rect x="-1" y="67" width="5" height="3" fill="#842d15"/><rect x="1" y="66" width="2" height="1" fill="#b65126"/><rect x="7" y="65" width="22" height="6" fill="#cd4d29"/><rect x="7" y="70" width="22" height="1" fill="#a4361d"/><rect x="15" y="65" width="9" height="3" fill="#a0361d"/><rect x="9" y="65" width="5" height="1" fill="#de6134"/><rect x="30" y="65" width="22" height="6" fill="#9d381e"/><rect x="30" y="70" width="22" height="1" fill="#7e2715"/><rect x="36" y="65" width="3" height="1" fill="#aa4625"/><rect x="-4" y="72" width="19" height="6" fill="#c14622"/><rect x="-4" y="77" width="19" height="1" fill="#9a3118"/><rect x="16" y="72" width="19" height="6" fill="#d1492a"/><rect x="16" y="77" width="19" height="1" fill="#a7331d"/><rect x="28" y="72" width="4" height="1" fill="#e25b35"/><rect x="36" y="72" width="22" height="6" fill="#c54925"/><rect x="36" y="77" width="22" height="1" fill="#9d331a"/><rect x="46" y="74" width="2" height="1" fill="#d45b2e"/><rect x="-4" y="79" width="19" height="6" fill="#b6391f"/><rect x="-4" y="84" width="19" height="1" fill="#922816"/><rect x="16" y="79" width="19" height="6" fill="#c64428"/><rect x="16" y="84" width="19" height="1" fill="#9e301c"/><rect x="36" y="79" width="9" height="6" fill="#ca4122"/><rect x="36" y="84" width="9" height="1" fill="#a22d18"/><rect x="40" y="80" width="2" height="1" fill="#da512b"/><rect x="46" y="79" width="9" height="6" fill="#b54222"/><rect x="46" y="84" width="9" height="1" fill="#912e18"/><rect x="46" y="80" width="4" height="2" fill="#8d2e18"/><rect x="-12" y="86" width="19" height="6" fill="#ad3f1f"/><rect x="-12" y="91" width="19" height="1" fill="#8a2c16"/><rect x="8" y="86" width="19" height="6" fill="#d44428"/><rect x="8" y="91" width="19" height="1" fill="#aa2f1c"/><rect x="28" y="86" width="19" height="6" fill="#d04e27"/><rect x="28" y="91" width="19" height="1" fill="#a6361b"/><rect x="39" y="88" width="5" height="1" fill="#a2361b"/><rect x="48" y="86" width="19" height="6" fill="#cd4927"/><rect x="48" y="91" width="19" height="1" fill="#a4331b"/><rect x="57" y="86" width="2" height="1" fill="#de5b31"/><rect x="0" y="93" width="19" height="6" fill="#c74929"/><rect x="0" y="98" width="19" height="1" fill="#9f331d"/><rect x="20" y="93" width="19" height="6" fill="#cd4124"/><rect x="20" y="98" width="19" height="1" fill="#a42d19"/><rect x="40" y="93" width="9" height="6" fill="#c9462a"/><rect x="40" y="98" width="9" height="1" fill="#a1311d"/><rect x="42" y="94" width="7" height="2" fill="#9d311d"/><rect x="-9" y="100" width="22" height="6" fill="#a2381e"/><rect x="-9" y="105" width="22" height="1" fill="#812715"/><rect x="6" y="103" width="5" height="3" fill="#7e2715"/><rect x="14" y="100" width="19" height="6" fill="#ce4323"/><rect x="14" y="105" width="19" height="1" fill="#a52f19"/><rect x="19" y="103" width="3" height="1" fill="#df542c"/><rect x="34" y="100" width="9" height="6" fill="#a53b1d"/><rect x="34" y="105" width="9" height="1" fill="#842914"/><rect x="44" y="100" width="22" height="6" fill="#a94020"/><rect x="44" y="105" width="22" height="1" fill="#872d16"/><rect x="57" y="102" width="5" height="3" fill="#842d16"/><rect x="57" y="100" width="5" height="1" fill="#b75028"/><rect x="-9" y="107" width="9" height="6" fill="#ce4325"/><rect x="-9" y="112" width="9" height="1" fill="#a42f1a"/><rect x="-8" y="109" width="9" height="1" fill="#a02f1a"/><rect x="1" y="107" width="19" height="6" fill="#d8492c"/><rect x="1" y="112" width="19" height="1" fill="#ad331f"/><rect x="21" y="107" width="9" height="6" fill="#ac3a21"/><rect x="21" y="112" width="9" height="1" fill="#8a2817"/><rect x="31" y="107" width="19" height="6" fill="#d44b2b"/><rect x="31" y="112" width="19" height="1" fill="#aa341e"/><rect x="-19" y="114" width="22" height="6" fill="#a03a22"/><rect x="-19" y="119" width="22" height="1" fill="#802817"/><rect x="4" y="114" width="19" height="6" fill="#bd4526"/><rect x="4" y="119" width="19" height="1" fill="#97301b"/><rect x="16" y="115" width="3" height="2" fill="#94301b"/><rect x="24" y="114" width="9" height="6" fill="#d34829"/><rect x="24" y="119" width="9" height="1" fill="#a8321d"/><rect x="26" y="117" width="6" height="1" fill="#a4321d"/><rect x="25" y="117" width="2" height="1" fill="#e45a34"/><rect x="34" y="114" width="19" height="6" fill="#a8361e"/><rect x="34" y="119" width="19" height="1" fill="#872615"/><rect x="34" y="116" width="3" height="1" fill="#b64425"/><rect x="-12" y="121" width="19" height="6" fill="#dd492e"/><rect x="-12" y="126" width="19" height="1" fill="#b03320"/><rect x="8" y="121" width="19" height="6" fill="#c84529"/><rect x="8" y="126" width="19" height="1" fill="#a0301d"/><rect x="14" y="123" width="7" height="2" fill="#9c301d"/><rect x="28" y="121" width="19" height="6" fill="#d5452c"/><rect x="28" y="126" width="19" height="1" fill="#ab301f"/><rect x="28" y="122" width="3" height="1" fill="#a6301f"/><rect x="48" y="121" width="19" height="6" fill="#d84927"/><rect x="48" y="126" width="19" height="1" fill="#ad331b"/><rect x="59" y="121" width="9" height="1" fill="#a9331b"/><rect x="-4" y="128" width="19" height="6" fill="#b73d25"/><rect x="-4" y="133" width="19" height="1" fill="#922b19"/><rect x="5" y="132" width="2" height="1" fill="#c54d2e"/><rect x="16" y="128" width="19" height="6" fill="#d54829"/><rect x="16" y="133" width="19" height="1" fill="#ab321c"/><rect x="36" y="128" width="19" height="6" fill="#b94527"/><rect x="36" y="133" width="19" height="1" fill="#94301b"/><rect x="-18" y="135" width="22" height="6" fill="#b63a20"/><rect x="-18" y="140" width="22" height="1" fill="#912916"/><rect x="-8" y="138" width="5" height="1" fill="#c44928"/><rect x="5" y="135" width="22" height="6" fill="#be4126"/><rect x="5" y="140" width="22" height="1" fill="#982d1b"/><rect x="11" y="138" width="8" height="1" fill="#942d1b"/><rect x="28" y="135" width="19" height="6" fill="#be4024"/><rect x="28" y="140" width="19" height="1" fill="#982d19"/><rect x="40" y="136" width="3" height="2" fill="#942d19"/><rect x="48" y="135" width="19" height="6" fill="#c04529"/><rect x="48" y="140" width="19" height="1" fill="#99301c"/><rect x="-5" y="142" width="19" height="6" fill="#a43a22"/><rect x="-5" y="147" width="19" height="1" fill="#832918"/><rect x="6" y="145" width="4" height="3" fill="#7f2918"/><rect x="15" y="142" width="19" height="6" fill="#ab371e"/><rect x="15" y="147" width="19" height="1" fill="#892715"/><rect x="22" y="142" width="7" height="3" fill="#852715"/><rect x="35" y="142" width="19" height="6" fill="#ae3e23"/><rect x="35" y="147" width="19" height="1" fill="#8b2b18"/><rect x="43" y="145" width="3" height="1" fill="#872b18"/><rect x="-19" y="149" width="9" height="6" fill="#d74e2c"/><rect x="-19" y="154" width="9" height="1" fill="#ac361f"/><rect x="-9" y="149" width="19" height="6" fill="#d4492a"/><rect x="-9" y="154" width="19" height="1" fill="#aa331e"/><rect x="0" y="150" width="4" height="1" fill="#a5331e"/><rect x="-9" y="149" width="4" height="1" fill="#e55b35"/><rect x="11" y="149" width="19" height="6" fill="#ad3821"/><rect x="11" y="154" width="19" height="1" fill="#8a2717"/><rect x="16" y="149" width="4" height="2" fill="#872717"/><rect x="31" y="149" width="9" height="6" fill="#ae3e23"/><rect x="31" y="154" width="9" height="1" fill="#8b2b18"/><rect x="33" y="152" width="9" height="1" fill="#872b18"/><rect x="34" y="153" width="4" height="1" fill="#bb4e2c"/><rect x="41" y="149" width="9" height="6" fill="#af3d22"/><rect x="41" y="154" width="9" height="1" fill="#8c2a18"/><rect x="-12" y="156" width="19" height="6" fill="#db4728"/><rect x="-12" y="161" width="19" height="1" fill="#af321c"/><rect x="-1" y="156" width="2" height="1" fill="#ed5932"/><rect x="8" y="156" width="19" height="6" fill="#d34e26"/><rect x="8" y="161" width="19" height="1" fill="#a9371a"/><rect x="13" y="159" width="5" height="3" fill="#a4371a"/><rect x="28" y="156" width="22" height="6" fill="#b34124"/><rect x="28" y="161" width="22" height="1" fill="#8f2d19"/><rect x="41" y="158" width="5" height="1" fill="#c1512e"/><rect x="-6" y="163" width="19" height="6" fill="#a8351e"/><rect x="-6" y="168" width="19" height="1" fill="#872515"/><rect x="5" y="166" width="8" height="3" fill="#832515"/><rect x="5" y="164" width="2" height="1" fill="#b64226"/><rect x="14" y="163" width="19" height="6" fill="#ad3723"/><rect x="14" y="168" width="19" height="1" fill="#8a2618"/><rect x="34" y="163" width="22" height="6" fill="#c34825"/><rect x="34" y="168" width="22" height="1" fill="#9c321a"/><rect x="-13" y="170" width="22" height="6" fill="#9a361e"/><rect x="-13" y="175" width="22" height="1" fill="#7b2615"/><rect x="-6" y="173" width="8" height="1" fill="#782615"/><rect x="10" y="170" width="19" height="6" fill="#bd4522"/><rect x="10" y="175" width="19" height="1" fill="#973018"/><rect x="30" y="170" width="19" height="6" fill="#d64f2a"/><rect x="30" y="175" width="19" height="1" fill="#ab371e"/><rect x="39" y="172" width="4" height="2" fill="#a7371e"/><rect x="-9" y="177" width="19" height="6" fill="#a33b22"/><rect x="-9" y="182" width="19" height="1" fill="#822918"/><rect x="-5" y="180" width="3" height="2" fill="#7f2918"/><rect x="11" y="177" width="9" height="6" fill="#a73723"/><rect x="11" y="182" width="9" height="1" fill="#852619"/><rect x="21" y="177" width="9" height="6" fill="#cb4525"/><rect x="21" y="182" width="9" height="1" fill="#a2301a"/><rect x="23" y="180" width="9" height="1" fill="#9e301a"/><rect x="31" y="177" width="9" height="6" fill="#9c361e"/><rect x="31" y="182" width="9" height="1" fill="#7c2515"/><rect x="31" y="178" width="4" height="1" fill="#792515"/><rect x="41" y="177" width="19" height="6" fill="#bc4827"/><rect x="41" y="182" width="19" height="1" fill="#97321b"/><rect x="48" y="179" width="6" height="3" fill="#93321b"/><rect x="-10" y="184" width="9" height="6" fill="#cf4a23"/><rect x="-10" y="189" width="9" height="1" fill="#a53418"/><rect x="-8" y="187" width="6" height="3" fill="#a13418"/><rect x="-6" y="187" width="5" height="1" fill="#df5d2c"/><rect x="0" y="184" width="19" height="6" fill="#d54926"/><rect x="0" y="189" width="19" height="1" fill="#aa331a"/><rect x="4" y="187" width="2" height="1" fill="#e65b30"/><rect x="20" y="184" width="19" height="6" fill="#9c311e"/><rect x="20" y="189" width="19" height="1" fill="#7d2215"/><rect x="20" y="187" width="3" height="2" fill="#7a2215"/><rect x="40" y="184" width="9" height="6" fill="#cc4b24"/><rect x="40" y="189" width="9" height="1" fill="#a33419"/><rect x="42" y="185" width="8" height="3" fill="#9f3419"/><rect x="-11" y="191" width="19" height="6" fill="#cb412a"/><rect x="-11" y="196" width="19" height="1" fill="#a32d1d"/><rect x="-9" y="193" width="7" height="2" fill="#9f2d1d"/><rect x="9" y="191" width="19" height="6" fill="#b83d25"/><rect x="9" y="196" width="19" height="1" fill="#932b1a"/><rect x="15" y="193" width="8" height="3" fill="#8f2b1a"/><rect x="29" y="191" width="19" height="6" fill="#cd4b2a"/><rect x="29" y="196" width="19" height="1" fill="#a4351d"/><rect x="33" y="192" width="6" height="3" fill="#a0351d"/><rect x="-19" y="198" width="9" height="6" fill="#ce4627"/><rect x="-19" y="203" width="9" height="1" fill="#a5311b"/><rect x="-19" y="199" width="5" height="1" fill="#a1311b"/><rect x="-9" y="198" width="19" height="6" fill="#ba4625"/><rect x="-9" y="203" width="19" height="1" fill="#95311a"/><rect x="2" y="199" width="2" height="1" fill="#c9572e"/><rect x="11" y="198" width="19" height="6" fill="#df502d"/><rect x="11" y="203" width="19" height="1" fill="#b2381f"/><rect x="21" y="201" width="6" height="3" fill="#ae381f"/><rect x="31" y="198" width="19" height="6" fill="#d44b25"/><rect x="31" y="203" width="19" height="1" fill="#aa341a"/><rect x="32" y="200" width="5" height="2" fill="#a5341a"/><rect x="1" y="205" width="22" height="6" fill="#b84122"/><rect x="1" y="210" width="22" height="1" fill="#932d17"/><rect x="24" y="205" width="9" height="6" fill="#de4d2c"/><rect x="24" y="210" width="9" height="1" fill="#b1351e"/><rect x="26" y="208" width="3" height="1" fill="#ef6037"/><rect x="34" y="205" width="19" height="6" fill="#b94225"/><rect x="34" y="210" width="19" height="1" fill="#942e1a"/><rect x="-11" y="212" width="22" height="6" fill="#cf452b"/><rect x="-11" y="217" width="22" height="1" fill="#a5301e"/><rect x="-8" y="212" width="4" height="1" fill="#e05736"/><rect x="12" y="212" width="19" height="6" fill="#d84b26"/><rect x="12" y="217" width="19" height="1" fill="#ad351a"/><rect x="14" y="212" width="4" height="1" fill="#a8351a"/><rect x="32" y="212" width="19" height="6" fill="#9f3c20"/><rect x="32" y="217" width="19" height="1" fill="#7f2a16"/><rect x="-7" y="219" width="9" height="6" fill="#b53c22"/><rect x="-7" y="224" width="9" height="1" fill="#902a18"/><rect x="-5" y="219" width="9" height="1" fill="#8d2a18"/><rect x="-5" y="220" width="3" height="1" fill="#c34b2b"/><rect x="3" y="219" width="9" height="6" fill="#b83f23"/><rect x="3" y="224" width="9" height="1" fill="#932c19"/><rect x="3" y="220" width="8" height="2" fill="#8f2c19"/><rect x="13" y="219" width="19" height="6" fill="#c24229"/><rect x="13" y="224" width="19" height="1" fill="#9b2e1c"/><rect x="33" y="219" width="22" height="6" fill="#d84a2b"/><rect x="33" y="224" width="22" height="1" fill="#ad331e"/><rect x="43" y="221" width="5" height="3" fill="#a9331e"/><rect x="49" y="220" width="3" height="1" fill="#ea5c36"/><rect x="-10" y="226" width="19" height="6" fill="#b73b23"/><rect x="-10" y="231" width="19" height="1" fill="#922918"/><rect x="3" y="230" width="5" height="1" fill="#c64a2c"/><rect x="10" y="226" width="19" height="6" fill="#a63b1c"/><rect x="10" y="231" width="19" height="1" fill="#842913"/><rect x="20" y="226" width="8" height="2" fill="#812913"/><rect x="16" y="228" width="5" height="1" fill="#b34a23"/><rect x="30" y="226" width="22" height="6" fill="#c63f24"/><rect x="30" y="231" width="22" height="1" fill="#9e2c19"/><rect x="35" y="229" width="3" height="1" fill="#d64e2d"/><rect x="-14" y="233" width="19" height="6" fill="#b74222"/><rect x="-14" y="238" width="19" height="1" fill="#922e18"/><rect x="-8" y="236" width="4" height="2" fill="#8f2e18"/><rect x="6" y="233" width="19" height="6" fill="#b23f1e"/><rect x="6" y="238" width="19" height="1" fill="#8e2c15"/><rect x="12" y="234" width="7" height="3" fill="#8b2c15"/><rect x="26" y="233" width="22" height="6" fill="#bf4823"/><rect x="26" y="238" width="22" height="1" fill="#993218"/><rect x="36" y="235" width="4" height="1" fill="#953218"/><rect x="42" y="233" width="2" height="1" fill="#ce5a2c"/><rect x="-15" y="240" width="19" height="6" fill="#a43a1f"/><rect x="-15" y="245" width="19" height="1" fill="#832816"/><rect x="-5" y="241" width="3" height="1" fill="#b14827"/><rect x="5" y="240" width="19" height="6" fill="#b74620"/><rect x="5" y="245" width="19" height="1" fill="#933116"/><rect x="15" y="240" width="3" height="1" fill="#8f3116"/><rect x="16" y="241" width="5" height="1" fill="#c65728"/><rect x="25" y="240" width="19" height="6" fill="#d74a29"/><rect x="25" y="245" width="19" height="1" fill="#ac341d"/><rect x="45" y="240" width="19" height="6" fill="#a93823"/><rect x="45" y="245" width="19" height="1" fill="#872718"/><rect x="-14" y="247" width="19" height="6" fill="#a4381f"/><rect x="-14" y="252" width="19" height="1" fill="#832715"/><rect x="-7" y="250" width="9" height="2" fill="#802715"/><rect x="-1" y="250" width="4" height="1" fill="#b24627"/><rect x="6" y="247" width="9" height="6" fill="#a8371c"/><rect x="6" y="252" width="9" height="1" fill="#862613"/><rect x="16" y="247" width="19" height="6" fill="#cf4d26"/><rect x="16" y="252" width="19" height="1" fill="#a6361a"/><rect x="23" y="247" width="8" height="1" fill="#a2361a"/><rect x="36" y="247" width="22" height="6" fill="#d64f2a"/><rect x="36" y="252" width="22" height="1" fill="#ab371d"/><rect x="-13" y="254" width="19" height="6" fill="#c44021"/><rect x="-13" y="259" width="19" height="1" fill="#9d2d17"/><rect x="7" y="254" width="9" height="6" fill="#a8351d"/><rect x="7" y="259" width="9" height="1" fill="#862514"/><rect x="9" y="256" width="6" height="1" fill="#832514"/><rect x="17" y="254" width="9" height="6" fill="#b83e23"/><rect x="17" y="259" width="9" height="1" fill="#932c18"/><rect x="19" y="254" width="3" height="1" fill="#8f2c18"/><rect x="21" y="258" width="3" height="1" fill="#c74e2c"/><rect x="27" y="254" width="19" height="6" fill="#e1512d"/><rect x="27" y="259" width="19" height="1" fill="#b43820"/><rect x="47" y="254" width="19" height="6" fill="#bf3f27"/><rect x="47" y="259" width="19" height="1" fill="#982c1b"/><rect x="50" y="257" width="8" height="2" fill="#952c1b"/><rect x="1" y="261" width="19" height="6" fill="#a2361d"/><rect x="1" y="266" width="19" height="1" fill="#822514"/><rect x="9" y="264" width="8" height="2" fill="#7e2514"/><rect x="21" y="261" width="9" height="6" fill="#b73e26"/><rect x="21" y="266" width="9" height="1" fill="#932b1a"/><rect x="31" y="261" width="19" height="6" fill="#ad4323"/><rect x="31" y="266" width="19" height="1" fill="#8b2e19"/><rect x="36" y="264" width="3" height="3" fill="#872e19"/><rect x="-13" y="268" width="19" height="6" fill="#bb4527"/><rect x="-13" y="273" width="19" height="1" fill="#95301b"/><rect x="-6" y="270" width="5" height="1" fill="#ca5631"/><rect x="7" y="268" width="19" height="6" fill="#bd4324"/><rect x="7" y="273" width="19" height="1" fill="#972f19"/><rect x="14" y="271" width="7" height="2" fill="#932f19"/><rect x="27" y="268" width="19" height="6" fill="#b13c23"/><rect x="27" y="273" width="19" height="1" fill="#8d2a18"/><rect x="38" y="269" width="6" height="1" fill="#8a2a18"/><rect x="47" y="268" width="19" height="6" fill="#ce4923"/><rect x="47" y="273" width="19" height="1" fill="#a53318"/><rect x="57" y="270" width="5" height="3" fill="#a13318"/><rect x="-3" y="275" width="19" height="6" fill="#be4326"/><rect x="-3" y="280" width="19" height="1" fill="#982f1b"/><rect x="9" y="275" width="3" height="1" fill="#942f1b"/><rect x="17" y="275" width="19" height="6" fill="#dd4f29"/><rect x="17" y="280" width="19" height="1" fill="#b1371c"/><rect x="24" y="276" width="4" height="1" fill="#ac371c"/><rect x="37" y="275" width="19" height="6" fill="#be3e21"/><rect x="37" y="280" width="19" height="1" fill="#982b17"/><rect x="42" y="276" width="5" height="2" fill="#942b17"/><rect x="-6" y="282" width="19" height="6" fill="#bb4127"/><rect x="-6" y="287" width="19" height="1" fill="#952d1b"/><rect x="5" y="285" width="5" height="1" fill="#ca5131"/><rect x="14" y="282" width="19" height="6" fill="#cd4c2b"/><rect x="14" y="287" width="19" height="1" fill="#a4351e"/><rect x="26" y="284" width="3" height="2" fill="#a0351e"/><rect x="21" y="286" width="4" height="1" fill="#de6035"/><rect x="34" y="282" width="19" height="6" fill="#b73725"/><rect x="34" y="287" width="19" height="1" fill="#93261a"/><rect x="-11" y="289" width="19" height="6" fill="#da4c2a"/><rect x="-11" y="294" width="19" height="1" fill="#ae351e"/><rect x="-2" y="290" width="7" height="1" fill="#aa351e"/><rect x="9" y="289" width="19" height="6" fill="#c14129"/><rect x="9" y="294" width="19" height="1" fill="#9a2d1d"/><rect x="11" y="291" width="9" height="3" fill="#962d1d"/><rect x="29" y="289" width="19" height="6" fill="#aa4124"/><rect x="29" y="294" width="19" height="1" fill="#882e19"/><rect x="29" y="292" width="4" height="3" fill="#842e19"/><rect x="-5" y="296" width="19" height="6" fill="#b23b23"/><rect x="-5" y="301" width="19" height="1" fill="#8e2918"/><rect x="0" y="296" width="4" height="2" fill="#8b2918"/><rect x="15" y="296" width="22" height="6" fill="#b6381e"/><rect x="15" y="301" width="22" height="1" fill="#922715"/><rect x="24" y="299" width="6" height="3" fill="#8e2715"/><rect x="22" y="297" width="4" height="1" fill="#c54625"/><rect x="38" y="296" width="19" height="6" fill="#c24626"/><rect x="38" y="301" width="19" height="1" fill="#9b311a"/><rect x="40" y="296" width="3" height="2" fill="#97311a"/><rect x="52" y="296" width="5" height="1" fill="#d1582f"/><rect x="-1" y="303" width="9" height="6" fill="#b03620"/><rect x="-1" y="308" width="9" height="1" fill="#8d2616"/><rect x="0" y="305" width="8" height="1" fill="#892616"/><rect x="9" y="303" width="22" height="6" fill="#a43b1d"/><rect x="9" y="308" width="22" height="1" fill="#832914"/><rect x="32" y="303" width="22" height="6" fill="#af3f20"/><rect x="32" y="308" width="22" height="1" fill="#8c2c16"/><rect x="39" y="306" width="7" height="2" fill="#882c16"/><rect x="-18" y="310" width="19" height="6" fill="#c24427"/><rect x="-18" y="315" width="19" height="1" fill="#9b2f1b"/><rect x="-7" y="313" width="9" height="1" fill="#972f1b"/><rect x="2" y="310" width="19" height="6" fill="#d7462b"/><rect x="2" y="315" width="19" height="1" fill="#ac311e"/><rect x="22" y="310" width="19" height="6" fill="#be4121"/><rect x="22" y="315" width="19" height="1" fill="#982d17"/><rect x="42" y="310" width="22" height="6" fill="#b93f20"/><rect x="42" y="315" width="22" height="1" fill="#942c16"/><rect x="58" y="314" width="4" height="1" fill="#c84f28"/><rect x="-1" y="317" width="19" height="6" fill="#ce4326"/><rect x="-1" y="322" width="19" height="1" fill="#a52f1a"/><rect x="7" y="317" width="4" height="1" fill="#a12f1a"/><rect x="-1" y="320" width="4" height="1" fill="#df542f"/><rect x="19" y="317" width="19" height="6" fill="#b24223"/><rect x="19" y="322" width="19" height="1" fill="#8f2e18"/><rect x="26" y="317" width="4" height="1" fill="#8b2e18"/><rect x="27" y="321" width="2" height="1" fill="#c1532c"/><rect x="39" y="317" width="9" height="6" fill="#c84822"/><rect x="39" y="322" width="9" height="1" fill="#a03218"/><rect x="-13" y="324" width="19" height="6" fill="#ab3622"/><rect x="-13" y="329" width="19" height="1" fill="#892617"/><rect x="-13" y="327" width="9" height="2" fill="#852617"/><rect x="7" y="324" width="19" height="6" fill="#bf3c27"/><rect x="7" y="329" width="19" height="1" fill="#992a1b"/><rect x="27" y="324" width="19" height="6" fill="#b93e20"/><rect x="27" y="329" width="19" height="1" fill="#942b17"/><rect x="34" y="328" width="2" height="1" fill="#c84e29"/><rect x="47" y="324" width="22" height="6" fill="#ac3a23"/><rect x="47" y="329" width="22" height="1" fill="#892918"/><rect x="58" y="325" width="3" height="3" fill="#862918"/><rect x="-13" y="331" width="19" height="6" fill="#c34727"/><rect x="-13" y="336" width="19" height="1" fill="#9c311b"/><rect x="-4" y="333" width="4" height="2" fill="#98311b"/><rect x="7" y="331" width="19" height="6" fill="#d64b29"/><rect x="7" y="336" width="19" height="1" fill="#ab341d"/><rect x="17" y="334" width="9" height="2" fill="#a7341d"/><rect x="27" y="331" width="9" height="6" fill="#a53d1f"/><rect x="27" y="336" width="9" height="1" fill="#842b15"/><rect x="30" y="331" width="2" height="1" fill="#b24d26"/><rect x="37" y="331" width="19" height="6" fill="#cb4328"/><rect x="37" y="336" width="19" height="1" fill="#a22f1c"/><rect x="-4" y="338" width="19" height="6" fill="#d34a24"/><rect x="-4" y="343" width="19" height="1" fill="#a93419"/><rect x="1" y="338" width="3" height="2" fill="#a43419"/><rect x="16" y="338" width="9" height="6" fill="#cb4629"/><rect x="16" y="343" width="9" height="1" fill="#a2311d"/><rect x="17" y="339" width="3" height="2" fill="#9e311d"/><rect x="26" y="338" width="22" height="6" fill="#c14123"/><rect x="26" y="343" width="22" height="1" fill="#9a2d18"/><rect x="41" y="338" width="4" height="1" fill="#d0512c"/><rect x="-18" y="345" width="19" height="6" fill="#d7462d"/><rect x="-18" y="350" width="19" height="1" fill="#ac3120"/><rect x="2" y="345" width="19" height="6" fill="#b34220"/><rect x="2" y="350" width="19" height="1" fill="#8f2e16"/><rect x="7" y="347" width="6" height="1" fill="#8b2e16"/><rect x="5" y="347" width="3" height="1" fill="#c15328"/><rect x="22" y="345" width="19" height="6" fill="#9b391b"/><rect x="22" y="350" width="19" height="1" fill="#7c2812"/><rect x="42" y="345" width="19" height="6" fill="#db4727"/><rect x="42" y="350" width="19" height="1" fill="#af321b"/><rect x="46" y="348" width="3" height="3" fill="#ab321b"/><rect x="1" y="352" width="19" height="6" fill="#b44424"/><rect x="1" y="357" width="19" height="1" fill="#902f19"/><rect x="8" y="352" width="5" height="2" fill="#8c2f19"/><rect x="21" y="352" width="22" height="6" fill="#ab3d24"/><rect x="21" y="357" width="22" height="1" fill="#892b19"/><rect x="22" y="355" width="6" height="3" fill="#852b19"/><rect x="44" y="352" width="19" height="6" fill="#9c341f"/><rect x="44" y="357" width="19" height="1" fill="#7d2516"/><rect x="46" y="356" width="2" height="1" fill="#a94227"/><rect x="-4" y="359" width="22" height="6" fill="#dd4e27"/><rect x="-4" y="364" width="22" height="1" fill="#b1371b"/><rect x="11" y="359" width="9" height="2" fill="#ac371b"/><rect x="19" y="359" width="19" height="6" fill="#aa3d20"/><rect x="19" y="364" width="19" height="1" fill="#882a16"/><rect x="27" y="359" width="4" height="2" fill="#852a16"/><rect x="39" y="359" width="22" height="6" fill="#ad3b21"/><rect x="39" y="364" width="22" height="1" fill="#8a2917"/><rect x="50" y="362" width="7" height="3" fill="#862917"/><rect x="-12" y="366" width="19" height="6" fill="#bf4028"/><rect x="-12" y="371" width="19" height="1" fill="#992d1c"/><rect x="8" y="366" width="22" height="6" fill="#b03c20"/><rect x="8" y="371" width="22" height="1" fill="#8d2a17"/><rect x="31" y="366" width="19" height="6" fill="#bb4427"/><rect x="31" y="371" width="19" height="1" fill="#962f1b"/><rect x="-18" y="373" width="19" height="6" fill="#a03320"/><rect x="-18" y="378" width="19" height="1" fill="#802416"/><rect x="-4" y="374" width="3" height="1" fill="#ad4028"/><rect x="2" y="373" width="19" height="6" fill="#c94429"/><rect x="2" y="378" width="19" height="1" fill="#a1301c"/><rect x="11" y="375" width="5" height="2" fill="#9d301c"/><rect x="22" y="373" width="9" height="6" fill="#d14e26"/><rect x="22" y="378" width="9" height="1" fill="#a7371a"/><rect x="23" y="374" width="4" height="3" fill="#a3371a"/><rect x="24" y="377" width="2" height="1" fill="#e16230"/><rect x="32" y="373" width="22" height="6" fill="#cf4a26"/><rect x="32" y="378" width="22" height="1" fill="#a6331a"/><rect x="-6" y="380" width="19" height="6" fill="#c94c29"/><rect x="-6" y="385" width="19" height="1" fill="#a1351d"/><rect x="5" y="383" width="5" height="1" fill="#9d351d"/><rect x="5" y="384" width="2" height="1" fill="#d95f34"/><rect x="14" y="380" width="19" height="6" fill="#ab3723"/><rect x="14" y="385" width="19" height="1" fill="#892618"/><rect x="24" y="382" width="5" height="1" fill="#852618"/><rect x="24" y="382" width="4" height="1" fill="#b9452c"/><rect x="34" y="380" width="9" height="6" fill="#cc4924"/><rect x="34" y="385" width="9" height="1" fill="#a33319"/><rect x="36" y="382" width="2" height="1" fill="#dc5b2e"/><rect x="44" y="380" width="9" height="6" fill="#a1361e"/><rect x="44" y="385" width="9" height="1" fill="#812615"/><rect x="46" y="383" width="9" height="3" fill="#7d2615"/><rect x="-6" y="387" width="22" height="6" fill="#b03d1f"/><rect x="-6" y="392" width="22" height="1" fill="#8d2a15"/><rect x="17" y="387" width="22" height="6" fill="#a93a22"/><rect x="17" y="392" width="22" height="1" fill="#872818"/><rect x="20" y="387" width="6" height="2" fill="#842818"/><rect x="40" y="387" width="19" height="6" fill="#b54421"/><rect x="40" y="392" width="19" height="1" fill="#912f17"/><rect x="-6" y="394" width="9" height="6" fill="#b33821"/><rect x="-6" y="399" width="9" height="1" fill="#8f2717"/><rect x="4" y="394" width="19" height="6" fill="#ad3c21"/><rect x="4" y="399" width="19" height="1" fill="#8a2a17"/><rect x="13" y="396" width="8" height="2" fill="#872a17"/><rect x="24" y="394" width="19" height="6" fill="#cb4928"/><rect x="24" y="399" width="19" height="1" fill="#a2331c"/><rect x="34" y="394" width="6" height="1" fill="#9e331c"/><rect x="30" y="394" width="2" height="1" fill="#db5b32"/><rect x="44" y="394" width="22" height="6" fill="#c84828"/><rect x="44" y="399" width="22" height="1" fill="#a0321c"/><rect x="49" y="395" width="9" height="2" fill="#9c321c"/><rect x="-12" y="401" width="19" height="6" fill="#c34725"/><rect x="-12" y="406" width="19" height="1" fill="#9c3219"/><rect x="8" y="401" width="19" height="6" fill="#a5331f"/><rect x="8" y="406" width="19" height="1" fill="#842415"/><rect x="13" y="401" width="9" height="3" fill="#812415"/><rect x="28" y="401" width="19" height="6" fill="#e45128"/><rect x="28" y="406" width="19" height="1" fill="#b6391c"/><rect x="39" y="403" width="6" height="3" fill="#b2391c"/><rect x="48" y="401" width="19" height="6" fill="#d44527"/><rect x="48" y="406" width="19" height="1" fill="#aa301b"/><rect x="-13" y="408" width="22" height="6" fill="#c84a26"/><rect x="-13" y="413" width="22" height="1" fill="#a0341a"/><rect x="-1" y="408" width="8" height="2" fill="#9c341a"/><rect x="10" y="408" width="19" height="6" fill="#c9452a"/><rect x="10" y="413" width="19" height="1" fill="#a1301d"/><rect x="30" y="408" width="19" height="6" fill="#cf4223"/><rect x="30" y="413" width="19" height="1" fill="#a62e18"/><rect x="-2" y="415" width="19" height="6" fill="#a53b20"/><rect x="-2" y="420" width="19" height="1" fill="#842916"/><rect x="2" y="415" width="4" height="2" fill="#812916"/><rect x="18" y="415" width="19" height="6" fill="#d94e26"/><rect x="18" y="420" width="19" height="1" fill="#ae361a"/><rect x="18" y="418" width="3" height="1" fill="#a9361a"/><rect x="38" y="415" width="19" height="6" fill="#c34423"/><rect x="38" y="420" width="19" height="1" fill="#9c3018"/><rect x="0" y="0" width="48" height="419" filter="url(#bf)" opacity=".5"/></svg><path d="M896 27H914V397L896 446Z" fill="#b4532e"/><rect x="896" y="27" width="2" height="414" fill="#b54f2b"/><rect x="897" y="27" width="1" height="414" fill="#8a3a20" opacity=".6"/><rect x="898" y="27" width="3" height="405" fill="#ab4b29"/><rect x="900" y="27" width="1" height="405" fill="#8a3a20" opacity=".6"/><rect x="901" y="27" width="2" height="400" fill="#a94a28"/><rect x="902" y="27" width="1" height="400" fill="#8a3a20" opacity=".6"/><rect x="903" y="27" width="2" height="394" fill="#af4c29"/><rect x="904" y="27" width="1" height="394" fill="#8a3a20" opacity=".6"/><rect x="905" y="27" width="2" height="389" fill="#bc522d"/><rect x="906" y="27" width="1" height="389" fill="#8a3a20" opacity=".6"/><rect x="907" y="28" width="3" height="380" fill="#bd522d"/><rect x="909" y="28" width="1" height="380" fill="#8a3a20" opacity=".6"/><rect x="910" y="30" width="3" height="370" fill="#ba512c"/><rect x="912" y="30" width="1" height="370" fill="#8a3a20" opacity=".6"/><rect x="913" y="31" width="2" height="363" fill="#c5562f"/><rect x="914" y="31" width="1" height="363" fill="#8a3a20" opacity=".6"/><rect x="905" y="27" width="9" height="4" fill="#393939"/><rect x="896" y="27" width="9" height="1" fill="#c06030"/><rect x="903" y="231" width="1" height="9" fill="#2a1510" opacity=".85"/><rect x="901" y="276" width="1" height="13" fill="#2a1510" opacity=".85"/><rect x="907" y="82" width="1" height="14" fill="#f0e0c8" opacity=".85"/><rect x="899" y="280" width="1" height="8" fill="#d89870" opacity=".85"/><rect x="898" y="177" width="1" height="11" fill="#e8d0b0" opacity=".85"/><rect x="910" y="144" width="1" height="8" fill="#f0e0c8" opacity=".85"/><rect x="899" y="276" width="1" height="11" fill="#2a1510" opacity=".85"/><rect x="911" y="66" width="1" height="8" fill="#2a1510" opacity=".85"/><rect x="903" y="122" width="1" height="14" fill="#d89870" opacity=".85"/><rect x="902" y="297" width="1" height="13" fill="#2a1510" opacity=".85"/><rect x="898" y="96" width="1" height="3" fill="#2a1510" opacity=".85"/><rect x="912" y="254" width="1" height="4" fill="#d89870" opacity=".85"/><rect x="899" y="113" width="1" height="7" fill="#f0e0c8" opacity=".85"/><rect x="897" y="235" width="1" height="8" fill="#2a1510" opacity=".85"/><rect x="909" y="142" width="1" height="3" fill="#2a1510" opacity=".85"/><rect x="911" y="171" width="1" height="11" fill="#d89870" opacity=".85"/><rect x="901" y="221" width="1" height="14" fill="#d89870" opacity=".85"/><rect x="898" y="107" width="1" height="14" fill="#f0e0c8" opacity=".85"/><rect x="901" y="351" width="1" height="9" fill="#e8d0b0" opacity=".85"/><rect x="900" y="100" width="1" height="5" fill="#6a2818" opacity=".85"/><rect x="902" y="130" width="1" height="9" fill="#2a1510" opacity=".85"/><rect x="903" y="327" width="1" height="8" fill="#d89870" opacity=".85"/><rect x="904" y="171" width="1" height="4" fill="#6a2818" opacity=".85"/><rect x="902" y="77" width="1" height="11" fill="#6a2818" opacity=".85"/><rect x="897" y="339" width="1" height="3" fill="#6a2818" opacity=".85"/><rect x="903" y="233" width="1" height="9" fill="#6a2818" opacity=".85"/><rect x="909" y="237" width="1" height="9" fill="#6a2818" opacity=".85"/><rect x="899" y="132" width="1" height="3" fill="#6a2818" opacity=".85"/><rect x="909" y="267" width="1" height="6" fill="#6a2818" opacity=".85"/><rect x="904" y="374" width="1" height="14" fill="#6a2818" opacity=".85"/><rect x="900" y="200" width="1" height="6" fill="#2a1510" opacity=".85"/><rect x="909" y="191" width="1" height="10" fill="#e8d0b0" opacity=".85"/><rect x="911" y="255" width="1" height="7" fill="#e8d0b0" opacity=".85"/><rect x="906" y="204" width="1" height="10" fill="#f0e0c8" opacity=".85"/><rect x="901" y="171" width="1" height="9" fill="#6a2818" opacity=".85"/><rect x="910" y="377" width="1" height="12" fill="#2a1510" opacity=".85"/><rect x="906" y="234" width="1" height="13" fill="#f0e0c8" opacity=".85"/><rect x="911" y="139" width="1" height="9" fill="#6a2818" opacity=".85"/><rect x="903" y="216" width="1" height="3" fill="#6a2818" opacity=".85"/><rect x="906" y="138" width="1" height="13" fill="#2a1510" opacity=".85"/><rect x="905" y="376" width="1" height="9" fill="#2a1510" opacity=".85"/><rect x="910" y="216" width="1" height="13" fill="#d89870" opacity=".85"/><rect x="897" y="97" width="1" height="11" fill="#f0e0c8" opacity=".85"/><rect x="903" y="40" width="1" height="11" fill="#6a2818" opacity=".85"/><rect x="902" y="301" width="1" height="10" fill="#2a1510" opacity=".85"/><rect x="905" y="253" width="1" height="10" fill="#f0e0c8" opacity=".85"/><rect x="906" y="142" width="1" height="14" fill="#e8d0b0" opacity=".85"/><rect x="900" y="197" width="1" height="4" fill="#f0e0c8" opacity=".85"/><rect x="898" y="69" width="1" height="9" fill="#6a2818" opacity=".85"/><rect x="908" y="325" width="1" height="13" fill="#f0e0c8" opacity=".85"/><rect x="906" y="139" width="1" height="4" fill="#d89870" opacity=".85"/><rect x="909" y="128" width="1" height="7" fill="#d89870" opacity=".85"/><rect x="907" y="105" width="1" height="5" fill="#d89870" opacity=".85"/><rect x="909" y="254" width="1" height="11" fill="#2a1510" opacity=".85"/><rect x="908" y="168" width="1" height="6" fill="#6a2818" opacity=".85"/><rect x="911" y="333" width="1" height="14" fill="#d89870" opacity=".85"/><rect x="902" y="285" width="1" height="12" fill="#d89870" opacity=".85"/><rect x="902" y="78" width="1" height="11" fill="#2a1510" opacity=".85"/><rect x="911" y="307" width="1" height="3" fill="#e8d0b0" opacity=".85"/><rect x="907" y="292" width="1" height="4" fill="#6a2818" opacity=".85"/><rect x="910" y="222" width="4" height="148" fill="#78b870"/><rect x="910" y="222" width="1" height="148" fill="#5a9a56"/><rect x="913" y="222" width="3" height="11" fill="#c8c8c8"/><rect x="913" y="336" width="3" height="12" fill="#b8b8b8"/><line x1="905.0" y1="195.5" x2="1051.5" y2="195.5" stroke="#585858" stroke-width="1"/><line x1="904.5" y1="198.2" x2="1050.6" y2="198.2" stroke="#585858" stroke-width="1"/><line x1="904.1" y1="200.9" x2="1049.7" y2="200.9" stroke="#585858" stroke-width="1"/><line x1="903.6" y1="203.6" x2="1048.8" y2="203.6" stroke="#585858" stroke-width="1"/><line x1="903.2" y1="206.3" x2="1047.9" y2="206.3" stroke="#585858" stroke-width="1"/><line x1="902.8" y1="209.0" x2="1047.0" y2="209.0" stroke="#585858" stroke-width="1"/><line x1="902.3" y1="211.7" x2="1046.1" y2="211.7" stroke="#585858" stroke-width="1"/><line x1="901.9" y1="214.4" x2="1045.2" y2="214.4" stroke="#585858" stroke-width="1"/><line x1="901.4" y1="217.1" x2="1044.3" y2="217.1" stroke="#585858" stroke-width="1"/><line x1="901.0" y1="219.8" x2="1043.4" y2="219.8" stroke="#585858" stroke-width="1"/><line x1="900.5" y1="222.5" x2="1042.5" y2="222.5" stroke="#585858" stroke-width="1"/><line x1="956" y1="195.5" x2="947.5" y2="222.5" stroke="#585858" stroke-width="1"/><line x1="1003.5" y1="195.5" x2="995.5" y2="222.5" stroke="#585858" stroke-width="1"/><line x1="902.7" y1="209.5" x2="1046.8" y2="209.5" stroke="#1e9a1e" stroke-width="1.6"/><circle cx="669" cy="208.5" r="2.5" fill="#f0a040" shape-rendering="auto"/><g shape-rendering="auto"><circle cx="901" cy="357.5" r="9.5" fill="none" stroke="#ff1a1a" stroke-width="1.4"/><circle cx="901" cy="357.5" r="9.5" fill="none" stroke="#fff" stroke-width="1.4" stroke-dasharray="3.73 3.73" stroke-dashoffset="1.86"/></g><rect x="881" y="357" width="15" height="1" fill="#000"/><rect x="906" y="357" width="15" height="1" fill="#000"/><rect x="901" y="338" width="1" height="15" fill="#000"/><rect x="901" y="363" width="1" height="15" fill="#000"/><path d="M393 37.5L397.5 29L399 27H416L408 30L399 35Z" fill="#c4c4c0" shape-rendering="auto"/><path d="M396 34L409 28.5M398 36L405 31.5" stroke="#8a8478" stroke-width=".8" shape-rendering="auto"/><path d="M905 27H933L932 30L929 37L912 30Z" fill="#4e4226" shape-rendering="auto"/><path d="M912 28.5L930 31M915 30.5L929 34" stroke="#6e5c34" stroke-width="1" shape-rendering="auto"/><path d="M926 27H933L932 30Z" fill="#d8d8d0" shape-rendering="auto"/><rect x="25" y="686" width="2" height="25" fill="#1010e0"/><rect x="0" y="710" width="27" height="2" fill="#10c010"/></svg>
<div class="t" style="left:20px;top:38px;color:#fff">User Ortho</div>
<div class="t" style="left:70px;top:717px;color:#fff;letter-spacing:.2px">(115) Schuppen</div>
<div class="t" style="left:29px;top:674px;color:#2020e0;font-size:10px">z</div>
<div class="t" style="left:29px;top:699px;color:#d02020;font-size:10px">x</div>
<div class="t" style="left:3px;top:701px;color:#20c020;font-size:10px">y</div>
</div></div>
<div id="vsep" class="a"></div>
<div id="outl" class="a"></div><div class="a" style="left:1334px;top:27px;width:32px;height:25px;background:#686868"></div><div class="a" style="left:1334px;top:52px;width:32px;height:1px;background:#7a7a7a"></div><div class="a" style="left:1334px;top:53px;width:32px;height:20px;background:#6e6e6e"></div><div class="a" style="left:1334px;top:73px;width:32px;height:20px;background:#737373"></div><div class="a" style="left:1334px;top:93px;width:32px;height:20px;background:#6e6e6e"></div><div class="a" style="left:1334px;top:113px;width:32px;height:20px;background:#737373"></div><div class="a" style="left:1334px;top:133px;width:32px;height:20px;background:#6e6e6e"></div><div class="a" style="left:1334px;top:153px;width:32px;height:20px;background:#737373"></div><div class="a" style="left:1334px;top:173px;width:32px;height:20px;background:#6e6e6e"></div><div class="a" style="left:1334px;top:193px;width:32px;height:20px;background:#737373"></div><div class="a" style="left:1334px;top:213px;width:32px;height:20px;background:#6e6e6e"></div><div class="a" style="left:1334px;top:233px;width:32px;height:20px;background:#737373"></div><div class="a" style="left:1334px;top:253px;width:32px;height:20px;background:#6e6e6e"></div><div class="a" style="left:1334px;top:273px;width:32px;height:20px;background:#737373"></div><div class="a" style="left:1334px;top:293px;width:32px;height:20px;background:#6e6e6e"></div><div class="a" style="left:1334px;top:313px;width:32px;height:20px;background:#737373"></div><div class="a" style="left:1334px;top:333px;width:32px;height:10px;background:#6e6e6e"></div><div class="a" style="left:1334px;top:343px;width:32px;height:20px;background:#727272"></div><div class="a" style="left:1347px;top:53px;width:1px;height:290px;background:#5f5f5f"></div><div class="a" style="left:1343px;top:30px;width:30px;height:20px;background:#404040;border:1px solid #2a2a2a;border-radius:5px"></div><svg class="a" style="left:1346px;top:32px" width="18" height="16" viewBox="0 0 18 16"><rect x="0.5" y="0" width="8" height="4" fill="#3a2500"/><rect x="1.3" y="0.6" width="6.6" height="2.8" fill="#f59a25"/><rect x="4" y="4" width="1" height="11" fill="#9ab0d0"/><rect x="4" y="8" width="4" height="1" fill="#9ab0d0"/><rect x="4" y="14" width="4" height="1" fill="#9ab0d0"/><rect x="8" y="6.4" width="8" height="3.6" fill="#222"/><rect x="8.7" y="7" width="6.6" height="2.6" fill="#fff"/><rect x="8" y="12.4" width="8" height="3.6" fill="#222"/><rect x="8.7" y="13" width="6.6" height="2.6" fill="#fff"/></svg><svg class="a" style="left:1334px;top:116px" width="12" height="16" viewBox="0 0 12 16"><path d="M1.8 1.5V13.2L4.4 10.6L6.7 14.8L8.3 13.9L6.1 9.8H9.6Z" fill="#fff" stroke="#111" stroke-width="1" stroke-linejoin="miter"/></svg><svg class="a" style="left:1349px;top:117px" width="15" height="14" viewBox="0 0 15 14"><path d="M2.5 1.5h3v2h-3z" fill="#eee" stroke="#111" stroke-width=".9"/><rect x="1.5" y="3" width="12" height="9.6" rx="1.2" fill="#f0f0f0" stroke="#111" stroke-width="1"/><rect x="2.4" y="4.8" width="2.6" height="6.8" fill="#1a1a1a"/><rect x="2.8" y="5.2" width="1.2" height="1.2" fill="#ff2020"/><circle cx="8" cy="8.4" r="3.3" fill="#151515"/><circle cx="8" cy="8.4" r="2.3" fill="#44609a"/><path d="M5.9 9.1A2.3 2.3 0 0 0 10.1 9.1Z" fill="#8a4a44"/><circle cx="7.3" cy="7.6" r=".7" fill="#c8d8f0"/><rect x="10.5" y="4.3" width="2.5" height="1" fill="#111"/></svg><svg class="a" style="left:1334px;top:136px" width="12" height="16" viewBox="0 0 12 16"><path d="M1.8 1.5V13.2L4.4 10.6L6.7 14.8L8.3 13.9L6.1 9.8H9.6Z" fill="#fff" stroke="#111" stroke-width="1" stroke-linejoin="miter"/></svg><svg class="a" style="left:1349px;top:137px" width="15" height="14" viewBox="0 0 15 14"><path d="M2.5 1.5h3v2h-3z" fill="#eee" stroke="#111" stroke-width=".9"/><rect x="1.5" y="3" width="12" height="9.6" rx="1.2" fill="#f0f0f0" stroke="#111" stroke-width="1"/><rect x="2.4" y="4.8" width="2.6" height="6.8" fill="#1a1a1a"/><rect x="2.8" y="5.2" width="1.2" height="1.2" fill="#ff2020"/><circle cx="8" cy="8.4" r="3.3" fill="#151515"/><circle cx="8" cy="8.4" r="2.3" fill="#44609a"/><path d="M5.9 9.1A2.3 2.3 0 0 0 10.1 9.1Z" fill="#8a4a44"/><circle cx="7.3" cy="7.6" r=".7" fill="#c8d8f0"/><rect x="10.5" y="4.3" width="2.5" height="1" fill="#111"/></svg><svg class="a" style="left:1334px;top:156px" width="12" height="16" viewBox="0 0 12 16"><path d="M1.8 1.5V13.2L4.4 10.6L6.7 14.8L8.3 13.9L6.1 9.8H9.6Z" fill="#fff" stroke="#111" stroke-width="1" stroke-linejoin="miter"/></svg><svg class="a" style="left:1349px;top:157px" width="15" height="14" viewBox="0 0 15 14"><path d="M2.5 1.5h3v2h-3z" fill="#eee" stroke="#111" stroke-width=".9"/><rect x="1.5" y="3" width="12" height="9.6" rx="1.2" fill="#f0f0f0" stroke="#111" stroke-width="1"/><rect x="2.4" y="4.8" width="2.6" height="6.8" fill="#1a1a1a"/><rect x="2.8" y="5.2" width="1.2" height="1.2" fill="#ff2020"/><circle cx="8" cy="8.4" r="3.3" fill="#151515"/><circle cx="8" cy="8.4" r="2.3" fill="#44609a"/><path d="M5.9 9.1A2.3 2.3 0 0 0 10.1 9.1Z" fill="#8a4a44"/><circle cx="7.3" cy="7.6" r=".7" fill="#c8d8f0"/><rect x="10.5" y="4.3" width="2.5" height="1" fill="#111"/></svg><svg class="a" style="left:1334px;top:176px" width="12" height="16" viewBox="0 0 12 16"><path d="M1.8 1.5V13.2L4.4 10.6L6.7 14.8L8.3 13.9L6.1 9.8H9.6Z" fill="#fff" stroke="#111" stroke-width="1" stroke-linejoin="miter"/></svg><svg class="a" style="left:1349px;top:177px" width="15" height="14" viewBox="0 0 15 14"><path d="M2.5 1.5h3v2h-3z" fill="#eee" stroke="#111" stroke-width=".9"/><rect x="1.5" y="3" width="12" height="9.6" rx="1.2" fill="#f0f0f0" stroke="#111" stroke-width="1"/><rect x="2.4" y="4.8" width="2.6" height="6.8" fill="#1a1a1a"/><rect x="2.8" y="5.2" width="1.2" height="1.2" fill="#ff2020"/><circle cx="8" cy="8.4" r="3.3" fill="#151515"/><circle cx="8" cy="8.4" r="2.3" fill="#44609a"/><path d="M5.9 9.1A2.3 2.3 0 0 0 10.1 9.1Z" fill="#8a4a44"/><circle cx="7.3" cy="7.6" r=".7" fill="#c8d8f0"/><rect x="10.5" y="4.3" width="2.5" height="1" fill="#111"/></svg><svg class="a" style="left:1334px;top:196px" width="12" height="16" viewBox="0 0 12 16"><path d="M1.8 1.5V13.2L4.4 10.6L6.7 14.8L8.3 13.9L6.1 9.8H9.6Z" fill="#fff" stroke="#111" stroke-width="1" stroke-linejoin="miter"/></svg><svg class="a" style="left:1349px;top:197px" width="15" height="14" viewBox="0 0 15 14"><path d="M2.5 1.5h3v2h-3z" fill="#eee" stroke="#111" stroke-width=".9"/><rect x="1.5" y="3" width="12" height="9.6" rx="1.2" fill="#f0f0f0" stroke="#111" stroke-width="1"/><rect x="2.4" y="4.8" width="2.6" height="6.8" fill="#1a1a1a"/><rect x="2.8" y="5.2" width="1.2" height="1.2" fill="#ff2020"/><circle cx="8" cy="8.4" r="3.3" fill="#151515"/><circle cx="8" cy="8.4" r="2.3" fill="#44609a"/><path d="M5.9 9.1A2.3 2.3 0 0 0 10.1 9.1Z" fill="#8a4a44"/><circle cx="7.3" cy="7.6" r=".7" fill="#c8d8f0"/><rect x="10.5" y="4.3" width="2.5" height="1" fill="#111"/></svg><svg class="a" style="left:1334px;top:216px" width="12" height="16" viewBox="0 0 12 16"><path d="M1.8 1.5V13.2L4.4 10.6L6.7 14.8L8.3 13.9L6.1 9.8H9.6Z" fill="#fff" stroke="#111" stroke-width="1" stroke-linejoin="miter"/></svg><svg class="a" style="left:1349px;top:217px" width="15" height="14" viewBox="0 0 15 14"><path d="M2.5 1.5h3v2h-3z" fill="#eee" stroke="#111" stroke-width=".9"/><rect x="1.5" y="3" width="12" height="9.6" rx="1.2" fill="#f0f0f0" stroke="#111" stroke-width="1"/><rect x="2.4" y="4.8" width="2.6" height="6.8" fill="#1a1a1a"/><rect x="2.8" y="5.2" width="1.2" height="1.2" fill="#ff2020"/><circle cx="8" cy="8.4" r="3.3" fill="#151515"/><circle cx="8" cy="8.4" r="2.3" fill="#44609a"/><path d="M5.9 9.1A2.3 2.3 0 0 0 10.1 9.1Z" fill="#8a4a44"/><circle cx="7.3" cy="7.6" r=".7" fill="#c8d8f0"/><rect x="10.5" y="4.3" width="2.5" height="1" fill="#111"/></svg><svg class="a" style="left:1334px;top:236px" width="12" height="16" viewBox="0 0 12 16"><path d="M1.8 1.5V13.2L4.4 10.6L6.7 14.8L8.3 13.9L6.1 9.8H9.6Z" fill="#fff" stroke="#111" stroke-width="1" stroke-linejoin="miter"/></svg><svg class="a" style="left:1349px;top:237px" width="15" height="14" viewBox="0 0 15 14"><path d="M2.5 1.5h3v2h-3z" fill="#eee" stroke="#111" stroke-width=".9"/><rect x="1.5" y="3" width="12" height="9.6" rx="1.2" fill="#f0f0f0" stroke="#111" stroke-width="1"/><rect x="2.4" y="4.8" width="2.6" height="6.8" fill="#1a1a1a"/><rect x="2.8" y="5.2" width="1.2" height="1.2" fill="#ff2020"/><circle cx="8" cy="8.4" r="3.3" fill="#151515"/><circle cx="8" cy="8.4" r="2.3" fill="#44609a"/><path d="M5.9 9.1A2.3 2.3 0 0 0 10.1 9.1Z" fill="#8a4a44"/><circle cx="7.3" cy="7.6" r=".7" fill="#c8d8f0"/><rect x="10.5" y="4.3" width="2.5" height="1" fill="#111"/></svg><svg class="a" style="left:1334px;top:256px" width="12" height="16" viewBox="0 0 12 16"><path d="M1.8 1.5V13.2L4.4 10.6L6.7 14.8L8.3 13.9L6.1 9.8H9.6Z" fill="#fff" stroke="#111" stroke-width="1" stroke-linejoin="miter"/></svg><svg class="a" style="left:1349px;top:257px" width="15" height="14" viewBox="0 0 15 14"><path d="M2.5 1.5h3v2h-3z" fill="#eee" stroke="#111" stroke-width=".9"/><rect x="1.5" y="3" width="12" height="9.6" rx="1.2" fill="#f0f0f0" stroke="#111" stroke-width="1"/><rect x="2.4" y="4.8" width="2.6" height="6.8" fill="#1a1a1a"/><rect x="2.8" y="5.2" width="1.2" height="1.2" fill="#ff2020"/><circle cx="8" cy="8.4" r="3.3" fill="#151515"/><circle cx="8" cy="8.4" r="2.3" fill="#44609a"/><path d="M5.9 9.1A2.3 2.3 0 0 0 10.1 9.1Z" fill="#8a4a44"/><circle cx="7.3" cy="7.6" r=".7" fill="#c8d8f0"/><rect x="10.5" y="4.3" width="2.5" height="1" fill="#111"/></svg><svg class="a" style="left:1334px;top:276px" width="12" height="16" viewBox="0 0 12 16"><path d="M1.8 1.5V13.2L4.4 10.6L6.7 14.8L8.3 13.9L6.1 9.8H9.6Z" fill="#fff" stroke="#111" stroke-width="1" stroke-linejoin="miter"/></svg><svg class="a" style="left:1349px;top:277px" width="15" height="14" viewBox="0 0 15 14"><path d="M2.5 1.5h3v2h-3z" fill="#eee" stroke="#111" stroke-width=".9"/><rect x="1.5" y="3" width="12" height="9.6" rx="1.2" fill="#f0f0f0" stroke="#111" stroke-width="1"/><rect x="2.4" y="4.8" width="2.6" height="6.8" fill="#1a1a1a"/><rect x="2.8" y="5.2" width="1.2" height="1.2" fill="#ff2020"/><circle cx="8" cy="8.4" r="3.3" fill="#151515"/><circle cx="8" cy="8.4" r="2.3" fill="#44609a"/><path d="M5.9 9.1A2.3 2.3 0 0 0 10.1 9.1Z" fill="#8a4a44"/><circle cx="7.3" cy="7.6" r=".7" fill="#c8d8f0"/><rect x="10.5" y="4.3" width="2.5" height="1" fill="#111"/></svg><svg class="a" style="left:1334px;top:296px" width="12" height="16" viewBox="0 0 12 16"><path d="M1.8 1.5V13.2L4.4 10.6L6.7 14.8L8.3 13.9L6.1 9.8H9.6Z" fill="#fff" stroke="#111" stroke-width="1" stroke-linejoin="miter"/></svg><svg class="a" style="left:1349px;top:297px" width="15" height="14" viewBox="0 0 15 14"><path d="M2.5 1.5h3v2h-3z" fill="#eee" stroke="#111" stroke-width=".9"/><rect x="1.5" y="3" width="12" height="9.6" rx="1.2" fill="#f0f0f0" stroke="#111" stroke-width="1"/><rect x="2.4" y="4.8" width="2.6" height="6.8" fill="#1a1a1a"/><rect x="2.8" y="5.2" width="1.2" height="1.2" fill="#ff2020"/><circle cx="8" cy="8.4" r="3.3" fill="#151515"/><circle cx="8" cy="8.4" r="2.3" fill="#44609a"/><path d="M5.9 9.1A2.3 2.3 0 0 0 10.1 9.1Z" fill="#8a4a44"/><circle cx="7.3" cy="7.6" r=".7" fill="#c8d8f0"/><rect x="10.5" y="4.3" width="2.5" height="1" fill="#111"/></svg><div class="a" style="left:1338px;top:346px;width:23px;height:13px;background:#5c5c5c;border-radius:7px;border:1px solid #666"></div><div class="a" style="left:1338px;top:346px;width:13px;height:13px;background:#888;border-radius:50%;border:1px solid #5a5a5a"></div><svg class="a" style="left:0;top:0;overflow:visible" width="1" height="1"><path d="M1334 351L1345 362" stroke="#000" stroke-width="1.3"/><path d="M1334 352.6L1343.4 362" stroke="#d0d0d0" stroke-width="1.1"/><path d="M1334 355L1341 362" stroke="#000" stroke-width="1.3"/><path d="M1334 356.6L1339.4 362" stroke="#d0d0d0" stroke-width="1.1"/><path d="M1334 359L1337 362" stroke="#000" stroke-width="1.3"/><path d="M1334 360.6L1335.4 362" stroke="#d0d0d0" stroke-width="1.1"/></svg><svg class="a" style="left:0;top:0;overflow:visible" width="1" height="1"><path d="M1354 27L1365 38" stroke="#d8d8d8" stroke-width="1.1"/><path d="M1355.6 27L1365 36.4" stroke="#000" stroke-width="1.3"/><path d="M1358 27L1365 34" stroke="#d8d8d8" stroke-width="1.1"/><path d="M1359.6 27L1365 32.4" stroke="#000" stroke-width="1.3"/><path d="M1362 27L1365 30" stroke="#d8d8d8" stroke-width="1.1"/><path d="M1363.6 27L1365 28.4" stroke="#000" stroke-width="1.3"/></svg>
<div id="psep" class="a"></div>
<div id="props" class="a"></div><div class="a" style="left:1334px;top:364px;width:32px;height:26px;background:#686868"></div><div class="a" style="left:1334px;top:390px;width:32px;height:1px;background:#7a7a7a"></div><div class="a" style="left:1334px;top:391px;width:32px;height:377px;background:#727272"></div><div class="a" style="left:1343px;top:367px;width:30px;height:20px;background:#404040;border:1px solid #2a2a2a;border-radius:5px"></div><svg class="a" style="left:1347px;top:369px" width="16" height="16" viewBox="0 0 16 16"><rect x="0.5" y="1.5" width="13" height="5" rx="2" fill="#222"/><rect x="1.3" y="2.2" width="7" height="3.6" fill="#6a6a6a"/><rect x="8.3" y="2.2" width="4.6" height="3.6" fill="#ddd"/><rect x="0.5" y="8.5" width="13" height="6" rx="2" fill="#fff" stroke="#222" stroke-width="1"/><rect x="3.5" y="10" width="7" height="3" fill="#bbb"/><path d="M1.6 11.5L3.2 9.8V13.2Z M12.4 11.5L10.8 9.8V13.2Z" fill="#111"/></svg><svg class="a" style="left:0;top:0;overflow:visible" width="1" height="1"><path d="M1354 364L1365 375" stroke="#d8d8d8" stroke-width="1.1"/><path d="M1355.6 364L1365 373.4" stroke="#000" stroke-width="1.3"/><path d="M1358 364L1365 371" stroke="#d8d8d8" stroke-width="1.1"/><path d="M1359.6 364L1365 369.4" stroke="#000" stroke-width="1.3"/><path d="M1362 364L1365 367" stroke="#d8d8d8" stroke-width="1.1"/><path d="M1363.6 364L1365 365.4" stroke="#000" stroke-width="1.3"/></svg><div class="a" style="left:1349px;top:395px;width:13px;height:369px;background:#5e5e5e;border-radius:7px;border:1px solid #6a6a6a"></div><div class="a" style="left:1349px;top:598px;width:13px;height:166px;background:linear-gradient(90deg,#8e8e8e,#a0a0a0);border-radius:7px;border:1px solid #4a4a4a"></div><div class="a" style="left:1345px;top:636px;width:5px;height:21px;background:#4c4c4c;border-radius:3px 0 0 3px;border:1px solid #3a3a3a"></div><div class="a" style="left:1340px;top:394px;width:4px;height:1px;background:#d8d8d8;box-shadow:0 1px 0 #3a3a3a"></div><div class="a" style="left:1340px;top:420px;width:4px;height:1px;background:#d8d8d8;box-shadow:0 1px 0 #3a3a3a"></div><div class="a" style="left:1340px;top:446px;width:4px;height:1px;background:#d8d8d8;box-shadow:0 1px 0 #3a3a3a"></div><div class="a" style="left:1340px;top:472px;width:4px;height:1px;background:#d8d8d8;box-shadow:0 1px 0 #3a3a3a"></div><div class="a" style="left:1340px;top:498px;width:4px;height:1px;background:#d8d8d8;box-shadow:0 1px 0 #3a3a3a"></div><div class="a" style="left:1340px;top:524px;width:4px;height:1px;background:#d8d8d8;box-shadow:0 1px 0 #3a3a3a"></div><div class="a" style="left:1340px;top:717px;width:4px;height:1px;background:#d8d8d8;box-shadow:0 1px 0 #3a3a3a"></div><div class="a" style="left:1340px;top:743px;width:4px;height:1px;background:#d8d8d8;box-shadow:0 1px 0 #3a3a3a"></div><div class="a" style="left:1336px;top:408px;width:1px;height:1px;background:#eee;box-shadow:0 1px 0 #222,0 3px 0 #eee,0 4px 0 #222"></div><div class="a" style="left:1336px;top:434px;width:1px;height:1px;background:#eee;box-shadow:0 1px 0 #222,0 3px 0 #eee,0 4px 0 #222"></div><div class="a" style="left:1336px;top:460px;width:1px;height:1px;background:#eee;box-shadow:0 1px 0 #222,0 3px 0 #eee,0 4px 0 #222"></div><div class="a" style="left:1336px;top:486px;width:1px;height:1px;background:#eee;box-shadow:0 1px 0 #222,0 3px 0 #eee,0 4px 0 #222"></div><div class="a" style="left:1336px;top:512px;width:1px;height:1px;background:#eee;box-shadow:0 1px 0 #222,0 3px 0 #eee,0 4px 0 #222"></div><div class="a" style="left:1336px;top:538px;width:1px;height:1px;background:#eee;box-shadow:0 1px 0 #222,0 3px 0 #eee,0 4px 0 #222"></div><div class="a" style="left:1336px;top:730px;width:1px;height:1px;background:#eee;box-shadow:0 1px 0 #222,0 3px 0 #eee,0 4px 0 #222"></div><div class="a" style="left:1347px;top:402px;width:2px;height:8px;background:#3e3e3e"></div><div class="a" style="left:1347px;top:428px;width:2px;height:8px;background:#3e3e3e"></div><div class="a" style="left:1347px;top:454px;width:2px;height:8px;background:#3e3e3e"></div><div class="a" style="left:1347px;top:480px;width:2px;height:8px;background:#3e3e3e"></div><div class="a" style="left:1347px;top:506px;width:2px;height:8px;background:#3e3e3e"></div><div class="a" style="left:1347px;top:725px;width:2px;height:8px;background:#3e3e3e"></div><div class="a" style="left:1347px;top:751px;width:2px;height:8px;background:#3e3e3e"></div><svg class="a" style="left:0;top:0;overflow:visible" width="1" height="1"><path d="M1334 756L1345 767" stroke="#000" stroke-width="1.3"/><path d="M1334 757.6L1343.4 767" stroke="#d0d0d0" stroke-width="1.1"/><path d="M1334 760L1341 767" stroke="#000" stroke-width="1.3"/><path d="M1334 761.6L1339.4 767" stroke="#d0d0d0" stroke-width="1.1"/><path d="M1334 764L1337 767" stroke="#000" stroke-width="1.3"/><path d="M1334 765.6L1335.4 767" stroke="#d0d0d0" stroke-width="1.1"/></svg>
<div id="tl" class="a"></div><div class="a" style="left:0;top:738px;width:1333px;height:12px;background:#464646"></div><div class="a" style="left:228px;top:738px;width:972px;height:12px;background:#727272"></div><div class="a" style="left:0;top:750px;width:1333px;height:18px;background:#727272"></div><div class="a" style="left:0;top:738px;width:1px;height:30px;background:#7a7a7a"></div><svg class="a" style="left:0;top:0" width="1333" height="768" shape-rendering="crispEdges"><rect x="8.7" y="738" width="1" height="12" fill="#303030" opacity="0.25"/><rect x="28.2" y="738" width="1" height="12" fill="#303030" opacity="0.35"/><rect x="47.7" y="738" width="1" height="12" fill="#303030" opacity="0.25"/><rect x="67.3" y="738" width="1" height="12" fill="#303030" opacity="0.35"/><rect x="86.8" y="738" width="1" height="12" fill="#303030" opacity="0.25"/><rect x="106.4" y="738" width="1" height="12" fill="#303030" opacity="0.35"/><rect x="125.9" y="738" width="1" height="12" fill="#303030" opacity="0.25"/><rect x="145.4" y="738" width="1" height="12" fill="#303030" opacity="0.35"/><rect x="165.0" y="738" width="1" height="12" fill="#303030" opacity="0.25"/><rect x="184.5" y="738" width="1" height="12" fill="#303030" opacity="0.35"/><rect x="204.1" y="738" width="1" height="12" fill="#303030" opacity="0.25"/><rect x="223.6" y="738" width="1" height="12" fill="#303030" opacity="0.35"/><rect x="243.1" y="738" width="1" height="12" fill="#303030" opacity="0.25"/><rect x="262.7" y="738" width="1" height="12" fill="#303030" opacity="0.35"/><rect x="282.2" y="738" width="1" height="12" fill="#303030" opacity="0.25"/><rect x="301.8" y="738" width="1" height="12" fill="#303030" opacity="0.35"/><rect x="321.3" y="738" width="1" height="12" fill="#303030" opacity="0.25"/><rect x="340.8" y="738" width="1" height="12" fill="#303030" opacity="0.35"/><rect x="360.4" y="738" width="1" height="12" fill="#303030" opacity="0.25"/><rect x="379.9" y="738" width="1" height="12" fill="#303030" opacity="0.35"/><rect x="399.5" y="738" width="1" height="12" fill="#303030" opacity="0.25"/><rect x="419.0" y="738" width="1" height="12" fill="#303030" opacity="0.35"/><rect x="438.5" y="738" width="1" height="12" fill="#303030" opacity="0.25"/><rect x="458.1" y="738" width="1" height="12" fill="#303030" opacity="0.35"/><rect x="477.6" y="738" width="1" height="12" fill="#303030" opacity="0.25"/><rect x="497.2" y="738" width="1" height="12" fill="#303030" opacity="0.35"/><rect x="516.7" y="738" width="1" height="12" fill="#303030" opacity="0.25"/><rect x="536.2" y="738" width="1" height="12" fill="#303030" opacity="0.35"/><rect x="555.8" y="738" width="1" height="12" fill="#303030" opacity="0.25"/><rect x="575.3" y="738" width="1" height="12" fill="#303030" opacity="0.35"/><rect x="594.9" y="738" width="1" height="12" fill="#303030" opacity="0.25"/><rect x="614.4" y="738" width="1" height="12" fill="#303030" opacity="0.35"/><rect x="633.9" y="738" width="1" height="12" fill="#303030" opacity="0.25"/><rect x="653.5" y="738" width="1" height="12" fill="#303030" opacity="0.35"/><rect x="673.0" y="738" width="1" height="12" fill="#303030" opacity="0.25"/><rect x="692.6" y="738" width="1" height="12" fill="#303030" opacity="0.35"/><rect x="712.1" y="738" width="1" height="12" fill="#303030" opacity="0.25"/><rect x="731.6" y="738" width="1" height="12" fill="#303030" opacity="0.35"/><rect x="751.2" y="738" width="1" height="12" fill="#303030" opacity="0.25"/><rect x="770.7" y="738" width="1" height="12" fill="#303030" opacity="0.35"/><rect x="790.3" y="738" width="1" height="12" fill="#303030" opacity="0.25"/><rect x="809.8" y="738" width="1" height="12" fill="#303030" opacity="0.35"/><rect x="829.3" y="738" width="1" height="12" fill="#303030" opacity="0.25"/><rect x="848.9" y="738" width="1" height="12" fill="#303030" opacity="0.35"/><rect x="868.4" y="738" width="1" height="12" fill="#303030" opacity="0.25"/><rect x="888.0" y="738" width="1" height="12" fill="#303030" opacity="0.35"/><rect x="907.5" y="738" width="1" height="12" fill="#303030" opacity="0.25"/><rect x="927.0" y="738" width="1" height="12" fill="#303030" opacity="0.35"/><rect x="946.6" y="738" width="1" height="12" fill="#303030" opacity="0.25"/><rect x="966.1" y="738" width="1" height="12" fill="#303030" opacity="0.35"/><rect x="985.7" y="738" width="1" height="12" fill="#303030" opacity="0.25"/><rect x="1005.2" y="738" width="1" height="12" fill="#303030" opacity="0.35"/><rect x="1024.7" y="738" width="1" height="12" fill="#303030" opacity="0.25"/><rect x="1044.3" y="738" width="1" height="12" fill="#303030" opacity="0.35"/><rect x="1063.8" y="738" width="1" height="12" fill="#303030" opacity="0.25"/><rect x="1083.4" y="738" width="1" height="12" fill="#303030" opacity="0.35"/><rect x="1102.9" y="738" width="1" height="12" fill="#303030" opacity="0.25"/><rect x="1122.4" y="738" width="1" height="12" fill="#303030" opacity="0.35"/><rect x="1142.0" y="738" width="1" height="12" fill="#303030" opacity="0.25"/><rect x="1161.5" y="738" width="1" height="12" fill="#303030" opacity="0.35"/><rect x="1181.1" y="738" width="1" height="12" fill="#303030" opacity="0.25"/><rect x="1200.6" y="738" width="1" height="12" fill="#303030" opacity="0.35"/><rect x="1220.1" y="738" width="1" height="12" fill="#303030" opacity="0.25"/><rect x="1239.7" y="738" width="1" height="12" fill="#303030" opacity="0.35"/><rect x="1259.2" y="738" width="1" height="12" fill="#303030" opacity="0.25"/><rect x="1278.8" y="738" width="1" height="12" fill="#303030" opacity="0.35"/><rect x="1298.3" y="738" width="1" height="12" fill="#303030" opacity="0.25"/><rect x="223" y="738" width="2" height="12" fill="#1a1a1a"/><rect x="671" y="738" width="3" height="12" fill="#5ac83a"/></svg><div class="a" style="left:4px;top:751px;width:1324px;height:13px;background:linear-gradient(#a0a0a0,#8a8a8a);border:1px solid #404040;border-radius:7px"></div><div class="a" style="left:6px;top:753px;width:8px;height:9px;background:#777;border-radius:50%"></div><div class="t" style="left:-11.5px;top:752px;width:80px;text-align:center;font-size:12px;letter-spacing:.4px;text-indent:.4px;color:#000;-webkit-text-stroke:.3px #000">-50</div><div class="t" style="left:27.3px;top:752px;width:80px;text-align:center;font-size:12px;letter-spacing:.4px;text-indent:.4px;color:#000;-webkit-text-stroke:.3px #000">-40</div><div class="t" style="left:66.0px;top:752px;width:80px;text-align:center;font-size:12px;letter-spacing:.4px;text-indent:.4px;color:#000;-webkit-text-stroke:.3px #000">-30</div><div class="t" style="left:104.8px;top:752px;width:80px;text-align:center;font-size:12px;letter-spacing:.4px;text-indent:.4px;color:#000;-webkit-text-stroke:.3px #000">-20</div><div class="t" style="left:143.5px;top:752px;width:80px;text-align:center;font-size:12px;letter-spacing:.4px;text-indent:.4px;color:#000;-webkit-text-stroke:.3px #000">-10</div><div class="t" style="left:185.6px;top:752px;width:80px;text-align:center;font-size:12px;letter-spacing:.4px;text-indent:.4px;color:#000;-webkit-text-stroke:.3px #000">0</div><div class="t" style="left:224.4px;top:752px;width:80px;text-align:center;font-size:12px;letter-spacing:.4px;text-indent:.4px;color:#000;-webkit-text-stroke:.3px #000">10</div><div class="t" style="left:263.1px;top:752px;width:80px;text-align:center;font-size:12px;letter-spacing:.4px;text-indent:.4px;color:#000;-webkit-text-stroke:.3px #000">20</div><div class="t" style="left:301.9px;top:752px;width:80px;text-align:center;font-size:12px;letter-spacing:.4px;text-indent:.4px;color:#000;-webkit-text-stroke:.3px #000">30</div><div class="t" style="left:340.6px;top:752px;width:80px;text-align:center;font-size:12px;letter-spacing:.4px;text-indent:.4px;color:#000;-webkit-text-stroke:.3px #000">40</div><div class="t" style="left:379.4px;top:752px;width:80px;text-align:center;font-size:12px;letter-spacing:.4px;text-indent:.4px;color:#000;-webkit-text-stroke:.3px #000">50</div><div class="t" style="left:418.1px;top:752px;width:80px;text-align:center;font-size:12px;letter-spacing:.4px;text-indent:.4px;color:#000;-webkit-text-stroke:.3px #000">60</div><div class="t" style="left:456.9px;top:752px;width:80px;text-align:center;font-size:12px;letter-spacing:.4px;text-indent:.4px;color:#000;-webkit-text-stroke:.3px #000">70</div><div class="t" style="left:495.6px;top:752px;width:80px;text-align:center;font-size:12px;letter-spacing:.4px;text-indent:.4px;color:#000;-webkit-text-stroke:.3px #000">80</div><div class="t" style="left:534.4px;top:752px;width:80px;text-align:center;font-size:12px;letter-spacing:.4px;text-indent:.4px;color:#000;-webkit-text-stroke:.3px #000">90</div><div class="t" style="left:573.2px;top:752px;width:80px;text-align:center;font-size:12px;letter-spacing:.4px;text-indent:.4px;color:#000;-webkit-text-stroke:.3px #000">100</div><div class="t" style="left:611.9px;top:752px;width:80px;text-align:center;font-size:12px;letter-spacing:.4px;text-indent:.4px;color:#000;-webkit-text-stroke:.3px #000">110</div><div class="t" style="left:650.7px;top:752px;width:80px;text-align:center;font-size:12px;letter-spacing:.4px;text-indent:.4px;color:#000;-webkit-text-stroke:.3px #000">120</div><div class="t" style="left:689.4px;top:752px;width:80px;text-align:center;font-size:12px;letter-spacing:.4px;text-indent:.4px;color:#000;-webkit-text-stroke:.3px #000">130</div><div class="t" style="left:728.2px;top:752px;width:80px;text-align:center;font-size:12px;letter-spacing:.4px;text-indent:.4px;color:#000;-webkit-text-stroke:.3px #000">140</div><div class="t" style="left:766.9px;top:752px;width:80px;text-align:center;font-size:12px;letter-spacing:.4px;text-indent:.4px;color:#000;-webkit-text-stroke:.3px #000">150</div><div class="t" style="left:805.7px;top:752px;width:80px;text-align:center;font-size:12px;letter-spacing:.4px;text-indent:.4px;color:#000;-webkit-text-stroke:.3px #000">160</div><div class="t" style="left:844.5px;top:752px;width:80px;text-align:center;font-size:12px;letter-spacing:.4px;text-indent:.4px;color:#000;-webkit-text-stroke:.3px #000">170</div><div class="t" style="left:883.2px;top:752px;width:80px;text-align:center;font-size:12px;letter-spacing:.4px;text-indent:.4px;color:#000;-webkit-text-stroke:.3px #000">180</div><div class="t" style="left:922.0px;top:752px;width:80px;text-align:center;font-size:12px;letter-spacing:.4px;text-indent:.4px;color:#000;-webkit-text-stroke:.3px #000">190</div><div class="t" style="left:960.7px;top:752px;width:80px;text-align:center;font-size:12px;letter-spacing:.4px;text-indent:.4px;color:#000;-webkit-text-stroke:.3px #000">200</div><div class="t" style="left:999.5px;top:752px;width:80px;text-align:center;font-size:12px;letter-spacing:.4px;text-indent:.4px;color:#000;-webkit-text-stroke:.3px #000">210</div><div class="t" style="left:1038.2px;top:752px;width:80px;text-align:center;font-size:12px;letter-spacing:.4px;text-indent:.4px;color:#000;-webkit-text-stroke:.3px #000">220</div><div class="t" style="left:1077.0px;top:752px;width:80px;text-align:center;font-size:12px;letter-spacing:.4px;text-indent:.4px;color:#000;-webkit-text-stroke:.3px #000">230</div><div class="t" style="left:1115.7px;top:752px;width:80px;text-align:center;font-size:12px;letter-spacing:.4px;text-indent:.4px;color:#000;-webkit-text-stroke:.3px #000">240</div><div class="t" style="left:1154.5px;top:752px;width:80px;text-align:center;font-size:12px;letter-spacing:.4px;text-indent:.4px;color:#000;-webkit-text-stroke:.3px #000">250</div><div class="t" style="left:1193.3px;top:752px;width:80px;text-align:center;font-size:12px;letter-spacing:.4px;text-indent:.4px;color:#000;-webkit-text-stroke:.3px #000">260</div><div class="t" style="left:1232.0px;top:752px;width:80px;text-align:center;font-size:12px;letter-spacing:.4px;text-indent:.4px;color:#000;-webkit-text-stroke:.3px #000">270</div><div class="t" style="left:1270.8px;top:752px;width:80px;text-align:center;font-size:12px;letter-spacing:.4px;text-indent:.4px;color:#000;-webkit-text-stroke:.3px #000">280</div><svg class="a" style="left:0;top:0;overflow:visible" width="1" height="1"><path d="M0 726L11 737" stroke="#000" stroke-width="1.3"/><path d="M0 727.6L9.4 737" stroke="#d0d0d0" stroke-width="1.1"/><path d="M0 730L7 737" stroke="#000" stroke-width="1.3"/><path d="M0 731.6L5.4 737" stroke="#d0d0d0" stroke-width="1.1"/><path d="M0 734L3 737" stroke="#000" stroke-width="1.3"/><path d="M0 735.6L1.4 737" stroke="#d0d0d0" stroke-width="1.1"/></svg><svg class="a" style="left:0;top:0;overflow:visible" width="1" height="1"><path d="M1321 738L1332 749" stroke="#d8d8d8" stroke-width="1.1"/><path d="M1322.6 738L1332 747.4" stroke="#000" stroke-width="1.3"/><path d="M1325 738L1332 745" stroke="#d8d8d8" stroke-width="1.1"/><path d="M1326.6 738L1332 743.4" stroke="#000" stroke-width="1.3"/><path d="M1329 738L1332 741" stroke="#d8d8d8" stroke-width="1.1"/><path d="M1330.6 738L1332 739.4" stroke="#000" stroke-width="1.3"/></svg><svg class="a" style="left:0;top:0;overflow:visible" width="1" height="1"><path d="M0 756L11 767" stroke="#000" stroke-width="1.3"/><path d="M0 757.6L9.4 767" stroke="#d0d0d0" stroke-width="1.1"/><path d="M0 760L7 767" stroke="#000" stroke-width="1.3"/><path d="M0 761.6L5.4 767" stroke="#d0d0d0" stroke-width="1.1"/><path d="M0 764L3 767" stroke="#000" stroke-width="1.3"/><path d="M0 765.6L1.4 767" stroke="#d0d0d0" stroke-width="1.1"/></svg><div class="a" style="left:1297px;top:755px;width:14px;height:13px;background:rgba(40,40,40,.35);border-radius:4px 4px 0 0"></div><svg class="a" style="left:1299px;top:757px" width="10" height="10" viewBox="0 0 10 10"><path d="M5 5V9M2 7.5H8" stroke="#888" stroke-width="1.6" opacity=".7"/></svg><svg class="a" style="left:0;top:0;overflow:visible" width="1" height="1"><path d="M0 14L11 25" stroke="#000" stroke-width="1.3"/><path d="M0 15.6L9.4 25" stroke="#d0d0d0" stroke-width="1.1"/><path d="M0 18L7 25" stroke="#000" stroke-width="1.3"/><path d="M0 19.6L5.4 25" stroke="#d0d0d0" stroke-width="1.1"/><path d="M0 22L3 25" stroke="#000" stroke-width="1.3"/><path d="M0 23.6L1.4 25" stroke="#d0d0d0" stroke-width="1.1"/></svg><svg class="a" style="left:0;top:0;overflow:visible" width="1" height="1"><path d="M1354 0L1365 11" stroke="#d8d8d8" stroke-width="1.1"/><path d="M1355.6 0L1365 9.4" stroke="#000" stroke-width="1.3"/><path d="M1358 0L1365 7" stroke="#d8d8d8" stroke-width="1.1"/><path d="M1359.6 0L1365 5.4" stroke="#000" stroke-width="1.3"/><path d="M1362 0L1365 3" stroke="#d8d8d8" stroke-width="1.1"/><path d="M1363.6 0L1365 1.4" stroke="#000" stroke-width="1.3"/></svg><svg class="a" style="left:0;top:0;overflow:visible" width="1" height="1"><path d="M1321 27L1332 38" stroke="#d8d8d8" stroke-width="1.1"/><path d="M1322.6 27L1332 36.4" stroke="#000" stroke-width="1.3"/><path d="M1325 27L1332 34" stroke="#d8d8d8" stroke-width="1.1"/><path d="M1326.6 27L1332 32.4" stroke="#000" stroke-width="1.3"/><path d="M1329 27L1332 30" stroke="#d8d8d8" stroke-width="1.1"/><path d="M1330.6 27L1332 28.4" stroke="#000" stroke-width="1.3"/></svg><div class="a" style="left:0px;top:49px;width:13px;height:14px;background:#2e2e2e;border-radius:0 4px 4px 0"></div><svg class="a" style="left:1px;top:51px" width="10" height="10" viewBox="0 0 10 10"><path d="M5 1.2V8.8M1.2 5H8.8" stroke="#222" stroke-width="3.4"/><path d="M5 1.8V8.2M1.8 5H8.2" stroke="#7c7c7c" stroke-width="2"/></svg><div class="a" style="left:1318px;top:49px;width:15px;height:14px;background:#2e2e2e;border-radius:4px 0 0 4px"></div><svg class="a" style="left:1320px;top:51px" width="10" height="10" viewBox="0 0 10 10"><path d="M5 1.2V8.8M1.2 5H8.8" stroke="#222" stroke-width="3.4"/><path d="M5 1.8V8.2M1.8 5H8.2" stroke="#7c7c7c" stroke-width="2"/></svg><div class="a" style="left:1297px;top:724px;width:14px;height:14px;background:#2e2e2e;border-radius:4px 4px 0 0"></div><svg class="a" style="left:1299px;top:726px" width="10" height="10" viewBox="0 0 10 10"><path d="M5 1.2V8.8M1.2 5H8.8" stroke="#222" stroke-width="3.4"/><path d="M5 1.8V8.2M1.8 5H8.2" stroke="#7c7c7c" stroke-width="2"/></svg><div class="a" style="left:0;top:27px;width:1px;height:710px;background:#4e4e4e"></div><div class="a" style="left:1334px;top:27px;width:1px;height:741px;background:#7e7e7e"></div>
</body></html>
